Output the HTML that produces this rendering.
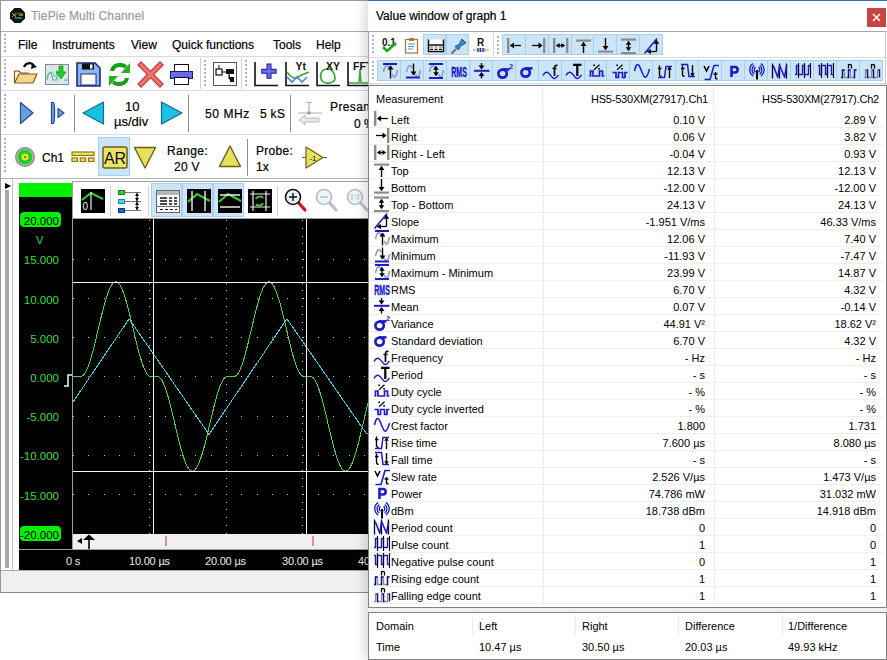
<!DOCTYPE html><html><head><meta charset="utf-8"><style>
*{margin:0;padding:0;box-sizing:border-box}
html,body{width:887px;height:660px;overflow:hidden;background:#fff;font-family:"Liberation Sans",sans-serif;color:#000}
.a{position:absolute}
.t{position:absolute;white-space:nowrap;font-size:12px;line-height:14px;color:#000;-webkit-text-stroke:0.2px currentColor}
.s{position:absolute;white-space:nowrap;font-size:11px;line-height:13px;color:#000}
.grip{position:absolute;width:2px;background:repeating-linear-gradient(#b4b4b4 0 2px,transparent 2px 4px)}
.hl{position:absolute;height:1px;background:#dadada}
.pb{position:absolute;background:#cce4f7;border:1px solid #a6cff0}
svg.a{overflow:visible}
</style></head><body>
<div class="a" style="left:0;top:0;width:887px;height:593px;background:#fff;border-left:1px solid #9a9a9a;border-top:1px solid #9a9a9a;border-bottom:1px solid #8a8a8a"></div>
<svg class="a" style="left:10px;top:8px" width="15" height="15" viewBox="0 0 15 15"><path d="M4.5 0H10.5L15 4.5V10.5L10.5 15H4.5L0 10.5V4.5Z" fill="#111"/><path d="M2 5L6 9M2 9L6 5" stroke="#3c3" stroke-width="1"/><path d="M5 8C7 4 9 5 13 6" stroke="#e44" stroke-width="1" fill="none"/><path d="M5 10H12" stroke="#4ce" stroke-width="1"/><path d="M9 7H13" stroke="#3d3" stroke-width="1.5"/></svg>
<div class="t" style="left:31px;top:9px;color:#9a9a9a;letter-spacing:0.15px">TiePie Multi Channel</div>
<div class="hl" style="left:1px;top:31px;width:886px;background:#ababab"></div>
<div class="grip" style="left:4px;top:34px;height:20px"></div>
<div class="t" style="left:18px;top:38px">File</div>
<div class="t" style="left:52px;top:38px">Instruments</div>
<div class="t" style="left:131px;top:38px">View</div>
<div class="t" style="left:172px;top:38px">Quick functions</div>
<div class="t" style="left:273px;top:38px">Tools</div>
<div class="t" style="left:316px;top:38px">Help</div>
<div class="hl" style="left:1px;top:56px;width:886px"></div>
<div class="grip" style="left:4px;top:59px;height:28px"></div>
<div class="hl" style="left:1px;top:90px;width:886px"></div>
<svg class="a" style="left:13px;top:61px" width="26" height="25" viewBox="0 0 26 25"><path d="M11 6C13 1 19 1 21 5" stroke="#111" stroke-width="2.2" fill="none"/><path d="M19 2L24 6L18 8Z" fill="#111"/><path d="M1.5 10H6L8 12H15V15" stroke="#8a5a18" stroke-width="1.2" fill="#f3c77a"/><path d="M1.5 10V22H20L24 13H6L1.5 22" stroke="#8a5a18" stroke-width="1.2" fill="#f7d58e" stroke-linejoin="round"/></svg>
<svg class="a" style="left:45px;top:64px" width="25" height="22" viewBox="0 0 25 22"><rect x="0.5" y="0.5" width="23" height="20" fill="#dfe6ea" stroke="#808a90"/><path d="M2 16C4 6 6 6 8 16H12V6" stroke="#4ab0e0" stroke-width="1.2" fill="none"/><path d="M2 13C5 5 8 8 10 13" stroke="#3c3" stroke-width="1" fill="none"/><path d="M11 8H14V2H18V8H21L16 15Z" fill="#22cc22" stroke="#1a9a1a" stroke-width="0.8"/><path d="M19 16H23" stroke="#4ab0e0" stroke-width="1.2"/></svg>
<svg class="a" style="left:76px;top:62px" width="25" height="25" viewBox="0 0 25 25"><path d="M1 1H19L24 6V24H1Z" fill="#8fb4f0" stroke="#1a2a80" stroke-width="1.6"/><rect x="6" y="1.5" width="12" height="6" fill="#111"/><rect x="14" y="2.5" width="2.5" height="4" fill="#fff"/><rect x="5" y="12" width="15" height="11" fill="#fff" stroke="#1a2a80" stroke-width="1"/></svg>
<svg class="a" style="left:107px;top:62px" width="25" height="25" viewBox="0 0 25 25"><path d="M5 9C6 3 14 1 19 5" stroke="#16a016" stroke-width="4" fill="none"/><path d="M23 1V11H14Z" fill="#22b222"/><path d="M20 16C19 22 11 24 6 20" stroke="#16a016" stroke-width="4" fill="none"/><path d="M2 24V14H11Z" fill="#22b222"/></svg>
<svg class="a" style="left:139px;top:63px" width="23" height="23" viewBox="0 0 23 23"><path d="M2 2L21 21M21 2L2 21" stroke="#b83030" stroke-width="5.5" stroke-linecap="square"/><path d="M2 2L21 21M21 2L2 21" stroke="#f07070" stroke-width="3.5" stroke-linecap="square"/></svg>
<svg class="a" style="left:170px;top:64px" width="24" height="22" viewBox="0 0 24 22"><rect x="4.5" y="0.5" width="14" height="7" fill="#fff" stroke="#111"/><rect x="0.5" y="7.5" width="22" height="7" fill="#6a6ae8" stroke="#1a1a80"/><rect x="4.5" y="13.5" width="14" height="7" fill="#fff" stroke="#111"/></svg>
<div class="a" style="left:200px;top:58px;width:1px;height:31px;background:#d0d0d0"></div>
<div class="grip" style="left:204px;top:60px;height:28px"></div>
<svg class="a" style="left:213px;top:62px" width="25" height="25" viewBox="0 0 25 25"><rect x="0.5" y="0.5" width="23" height="23" fill="#fff" stroke="#555"/><rect x="3" y="7" width="6" height="6" fill="#fff" stroke="#111" stroke-width="1.2"/><path d="M6 3V7M9 10H13M16 12V17H18" stroke="#111"/><rect x="13" y="7" width="8" height="5" fill="#111"/><rect x="17" y="15" width="4" height="5" fill="#111"/></svg>
<div class="a" style="left:241px;top:58px;width:1px;height:31px;background:#d0d0d0"></div>
<div class="grip" style="left:245px;top:60px;height:28px"></div>
<svg class="a" style="left:254px;top:62px" width="25" height="25" viewBox="0 0 25 25"><path d="M1 0V23.5H24" stroke="#111" stroke-width="1.6" fill="none"/><path d="M15 1.5V16.8M7.2 9.2H22.6" stroke="#1a1a90" stroke-width="5"/><path d="M15 2.5V15.8M8.2 9.2H21.6" stroke="#6a6af0" stroke-width="3"/></svg>
<svg class="a" style="left:285px;top:62px" width="25" height="25" viewBox="0 0 25 25"><path d="M1 0V23.5H24" stroke="#111" stroke-width="1.6" fill="none"/><path d="M2 10C5 14 9 18 13 15S20 12 24 10" stroke="#3aa53a" stroke-width="1.6" fill="none"/><path d="M2 15L7 20L12 15L17 20L22 15" stroke="#4a8ac0" stroke-width="1.6" fill="none"/><text x="10.5" y="8.3" font-family="Liberation Sans" font-weight="bold" font-size="10.5" fill="#111">Yt</text></svg>
<svg class="a" style="left:316px;top:62px" width="25" height="25" viewBox="0 0 25 25"><path d="M1 0V23.5H24" stroke="#111" stroke-width="1.6" fill="none"/><path d="M11 7C5 7 3 14 6 19C10 23 19 21 19 16C19 11 15 6 11 7Z" stroke="#3aa53a" stroke-width="1.7" fill="none"/><text x="10" y="8.3" font-family="Liberation Sans" font-weight="bold" font-size="10.5" fill="#111">XY</text></svg>
<svg class="a" style="left:347px;top:62px" width="25" height="25" viewBox="0 0 25 25"><path d="M1 0V23.5H24" stroke="#111" stroke-width="1.6" fill="none"/><path d="M2 21H12L13 7L14 21H24" stroke="#3aa53a" stroke-width="1.4" fill="none"/><text x="6" y="8.3" font-family="Liberation Sans" font-weight="bold" font-size="10.5" fill="#111">FFT</text></svg>
<div class="grip" style="left:4px;top:94px;height:36px"></div>
<div class="hl" style="left:1px;top:134px;width:886px"></div>
<svg class="a" style="left:19px;top:101px" width="16" height="24" viewBox="0 0 16 24"><path d="M1.5 1.5L14 12L1.5 22.5Z" fill="#6a9ee0" stroke="#1f4f90" stroke-width="1.2" stroke-linejoin="round"/></svg>
<svg class="a" style="left:50px;top:101px" width="16" height="24" viewBox="0 0 16 24"><path d="M1.5 1.5H3.5C5 4 5 20 3.5 22.5H1.5Z" fill="#6a9ee0" stroke="#1f4f90" stroke-width="1.2"/><path d="M8 7.5L14 12L8 16.5Z" fill="#6a9ee0" stroke="#1f4f90" stroke-width="1.2" stroke-linejoin="round"/></svg>
<div class="a" style="left:74px;top:95px;width:1px;height:37px;background:#8a8a8a"></div>
<svg class="a" style="left:82px;top:101px" width="23" height="24" viewBox="0 0 23 24"><path d="M21.5 1L1 12L21.5 23Z" fill="#1cc0e0" stroke="#0d6aa0" stroke-width="1.2" stroke-linejoin="round"/></svg>
<div class="t" style="left:125px;top:100px;font-size:13px">10</div>
<div class="t" style="left:114px;top:115px;font-size:13px">µs/div</div>
<svg class="a" style="left:160px;top:101px" width="23" height="24" viewBox="0 0 23 24"><path d="M1.5 1L22 12L1.5 23Z" fill="#1cc0e0" stroke="#0d6aa0" stroke-width="1.2" stroke-linejoin="round"/></svg>
<div class="a" style="left:188px;top:95px;width:1px;height:37px;background:#8a8a8a"></div>
<div class="t" style="left:205px;top:107px;letter-spacing:0.6px">50 MHz</div>
<div class="t" style="left:260px;top:107px;letter-spacing:0.3px">5 kS</div>
<div class="a" style="left:290px;top:95px;width:1px;height:37px;background:#8a8a8a"></div>
<svg class="a" style="left:297px;top:101px" width="26" height="24" viewBox="0 0 26 24"><path d="M9 1.5H15M12 1.5V11M1 12H25" stroke="#b0b0b0" stroke-width="1.2"/><rect x="10.5" y="10.5" width="3" height="3" fill="#999"/><path d="M2 19L8 14V17H22V21H8V24Z" fill="#e8e8e8" stroke="#b8b8b8" stroke-width="1"/></svg>
<div class="t" style="left:330px;top:100px;letter-spacing:0.4px">Presamples</div>
<div class="t" style="left:354px;top:117px">0 %</div>
<div class="grip" style="left:4px;top:138px;height:36px"></div>
<div class="hl" style="left:1px;top:178px;width:886px;background:#b4b4b4"></div>
<svg class="a" style="left:14px;top:146px" width="22" height="22" viewBox="0 0 22 22"><circle cx="11" cy="11" r="10" fill="#8a8a8a"/><circle cx="11" cy="11" r="8.6" fill="#bdbdbd"/><circle cx="11" cy="11" r="7.4" fill="#1ed01e"/><circle cx="11" cy="11" r="3.6" fill="#d8e830"/><circle cx="11" cy="11" r="1.1" fill="#a06000"/></svg>
<div class="t" style="left:42px;top:151px">Ch1</div>
<svg class="a" style="left:71px;top:151px" width="24" height="12" viewBox="0 0 24 12"><rect x="1" y="1" width="22" height="3.5" fill="#f0e060" stroke="#8a7a10" stroke-width="1.2"/><rect x="1" y="7" width="5.5" height="3.5" fill="#f0e060" stroke="#8a7a10" stroke-width="1.2"/><rect x="9.25" y="7" width="5.5" height="3.5" fill="#f0e060" stroke="#8a7a10" stroke-width="1.2"/><rect x="17.5" y="7" width="5.5" height="3.5" fill="#f0e060" stroke="#8a7a10" stroke-width="1.2"/></svg>
<div class="pb" style="left:98px;top:137px;width:32px;height:39px"></div>
<svg class="a" style="left:102px;top:146px" width="26" height="23" viewBox="0 0 26 23"><rect x="1" y="1" width="24" height="21" rx="2" fill="#ece46a" stroke="#6a6010" stroke-width="1.5"/><text x="13" y="18" text-anchor="middle" font-family="Liberation Sans" font-size="16" fill="#111">AR</text></svg>
<svg class="a" style="left:133px;top:146px" width="24" height="23" viewBox="0 0 24 23"><path d="M1.5 1.5H22.5L12 22Z" fill="#e8e060" stroke="#6a6010" stroke-width="1.4" stroke-linejoin="round"/></svg>
<div class="t" style="left:167px;top:144px;letter-spacing:0.4px">Range:</div>
<div class="t" style="left:174px;top:160px;letter-spacing:0.3px">20 V</div>
<svg class="a" style="left:218px;top:145px" width="24" height="23" viewBox="0 0 24 23"><path d="M1.5 21.5H22.5L12 1Z" fill="#e8e060" stroke="#6a6010" stroke-width="1.4" stroke-linejoin="round"/></svg>
<div class="a" style="left:247px;top:139px;width:1px;height:37px;background:#8a8a8a"></div>
<div class="t" style="left:256px;top:144px;letter-spacing:0.3px">Probe:</div>
<div class="t" style="left:256px;top:160px">1x</div>
<svg class="a" style="left:302px;top:146px" width="26" height="23" viewBox="0 0 26 23"><path d="M0 11.5H4M20 11.5H25" stroke="#6a6010" stroke-width="1"/><path d="M4 1L21 11.5L4 22Z" fill="#e8e060" stroke="#6a6010" stroke-width="1.2" stroke-linejoin="round"/><text x="11" y="14.5" text-anchor="middle" font-family="Liberation Sans" font-size="8" fill="#111">-1</text></svg>
<svg class="a" style="left:5px;top:183px" width="6" height="6" viewBox="0 0 6 6"><path d="M0 0L6 3L0 6Z" fill="#000"/></svg>
<div class="a" style="left:5px;top:190px;width:4px;height:378px;background:#a8a8a8"></div>
<div class="a" style="left:12px;top:179px;width:1px;height:392px;background:#c4c4c4"></div>
<div class="a" style="left:19px;top:183px;width:53px;height:366px;background:#000"></div>
<div class="a" style="left:19px;top:183px;width:53px;height:14px;background:#00f000"></div>
<div class="a" style="left:72px;top:181px;width:1px;height:368px;background:#a0a0a0"></div>
<div class="a" style="left:73px;top:181px;width:814px;height:1px;background:#a0a0a0"></div>
<div class="a" style="left:73px;top:182px;width:814px;height:36px;background:#fff"></div>
<div class="a" style="left:73px;top:218px;width:814px;height:1px;background:#a0a0a0"></div>
<div class="a" style="left:73px;top:534px;width:814px;height:15px;background:#f0f0f0"></div>
<div class="a" style="left:19px;top:549px;width:868px;height:1px;background:#a0a0a0"></div>
<div class="a" style="left:19px;top:550px;width:868px;height:20px;background:#000"></div>
<div class="a" style="left:1px;top:570px;width:886px;height:1px;background:#a8a8a8"></div>
<div class="a" style="left:1px;top:571px;width:886px;height:21px;background:#f0f0f0"></div>
<div class="a" style="left:20px;top:212px;width:41px;height:15px;background:#00f000;border-radius:4px"></div>
<div class="s" style="right:828px;top:215px;color:#000;font-size:11.5px">20.000</div>
<div class="s" style="right:828px;top:254px;color:#3ddc3d;font-size:11.5px">15.000</div>
<div class="s" style="right:828px;top:294px;color:#3ddc3d;font-size:11.5px">10.000</div>
<div class="s" style="right:828px;top:333px;color:#3ddc3d;font-size:11.5px">5.000</div>
<div class="s" style="right:828px;top:372px;color:#3ddc3d;font-size:11.5px">0.000</div>
<div class="s" style="right:828px;top:411px;color:#3ddc3d;font-size:11.5px">-5.000</div>
<div class="s" style="right:828px;top:450px;color:#3ddc3d;font-size:11.5px">-10.000</div>
<div class="s" style="right:828px;top:490px;color:#3ddc3d;font-size:11.5px">-15.000</div>
<div class="a" style="left:20px;top:526px;width:41px;height:15px;background:#00f000;border-radius:4px"></div>
<div class="s" style="right:828px;top:529px;color:#000;font-size:11.5px">-20.000</div>
<div class="s" style="left:36px;top:234px;color:#3ddc3d;font-size:11px">V</div>
<svg class="a" style="left:81px;top:189px" width="24" height="24" viewBox="0 0 24 24"><rect width="24" height="24" fill="#000"/><path d="M1 11L10 4L22 10" stroke="#3c3" stroke-width="2" fill="none"/><path d="M10 3V21" stroke="#eee" stroke-width="1.2"/><text x="1.5" y="21" font-family="Liberation Sans" font-size="10" fill="#eee">0</text></svg>
<div class="a" style="left:110px;top:186px;width:1px;height:30px;background:#d0d0d0"></div>
<svg class="a" style="left:118px;top:189px" width="24" height="24" viewBox="0 0 24 24"><rect x="0.5" y="1.5" width="6" height="4" fill="#3c3" stroke="#1a7a1a"/><rect x="0.5" y="10.5" width="6" height="4" fill="#2ce0f0" stroke="#1a8a9a"/><rect x="0.5" y="19.5" width="6" height="4" fill="#1a6acc" stroke="#0a3a80"/><path d="M7 3.5H23M7 12.5H23M7 21.5H23" stroke="#555" stroke-width="0.8"/><path d="M19 4V21" stroke="#000" stroke-width="1"/><path d="M19 4L17 7H21ZM19 12L17 9H21ZM19 13L17 16H21ZM19 21L17 18H21Z" fill="#000"/></svg>
<div class="a" style="left:148px;top:186px;width:1px;height:30px;background:#d0d0d0"></div>
<div class="pb" style="left:151px;top:183px;width:31px;height:34px"></div>
<div class="pb" style="left:182px;top:183px;width:31px;height:34px"></div>
<div class="pb" style="left:213px;top:183px;width:31px;height:34px"></div>
<svg class="a" style="left:156px;top:190px" width="24" height="23" viewBox="0 0 24 23"><rect x="0.5" y="0.5" width="23" height="22" fill="#fff" stroke="#666"/><rect x="1" y="1" width="22" height="4" fill="#b8b8b8"/><path d="M4 8H11M13 8H16M18 8H21M4 11H11M13 11H16M18 11H21M4 14H11M13 14H16M18 14H21" stroke="#111" stroke-width="1.4"/><path d="M1 16.5H23" stroke="#666"/><path d="M4 19.5H7M9 19.5H12M14 19.5H17M19 19.5H21" stroke="#111" stroke-width="1.2"/></svg>
<svg class="a" style="left:187px;top:189px" width="24" height="24" viewBox="0 0 24 24"><rect width="24" height="24" fill="#000"/><path d="M1 13L10 5L23 12" stroke="#3c3" stroke-width="2.2" fill="none"/><path d="M5 2V22M18 2V22" stroke="#eee" stroke-width="1.4"/></svg>
<svg class="a" style="left:218px;top:189px" width="24" height="24" viewBox="0 0 24 24"><rect width="24" height="24" fill="#000"/><path d="M1 13L10 5L23 12" stroke="#3c3" stroke-width="2.2" fill="none"/><path d="M2 6H22M2 18H22" stroke="#eee" stroke-width="1.4"/></svg>
<svg class="a" style="left:248px;top:189px" width="24" height="24" viewBox="0 0 24 24"><rect width="24" height="24" fill="#000"/><path d="M5 2V22M18 2V22M2 5H22M2 18H22" stroke="#eee" stroke-width="1.2"/><path d="M8 10C9 7 14 7 15 9M15 14C14 17 9 17 8 15" stroke="#3c3" stroke-width="2" fill="none"/></svg>
<div class="a" style="left:277px;top:186px;width:1px;height:30px;background:#d0d0d0"></div>
<svg class="a" style="left:284px;top:188px" width="24" height="25" viewBox="0 0 24 25"><path d="M13 13L21 22" stroke="#d01020" stroke-width="3.2" stroke-linecap="round"/><circle cx="9" cy="9" r="7.5" fill="#e8f4f8" stroke="#111" stroke-width="1.6"/><path d="M5 9H13M9 5V13" stroke="#111" stroke-width="1.4"/></svg>
<svg class="a" style="left:315px;top:188px" width="24" height="25" viewBox="0 0 24 25"><path d="M13 13L21 22" stroke="#c0c0c0" stroke-width="3.2" stroke-linecap="round"/><circle cx="9" cy="9" r="7.5" fill="#e8f4f8" stroke="#bbb" stroke-width="1.6"/><path d="M5 9H13" stroke="#bbb" stroke-width="1.4"/></svg>
<svg class="a" style="left:346px;top:188px" width="24" height="25" viewBox="0 0 24 25"><path d="M13 13L21 22" stroke="#c0c0c0" stroke-width="3.2" stroke-linecap="round"/><circle cx="9" cy="9" r="7.5" fill="#e8f4f8" stroke="#bbb" stroke-width="1.6"/><path d="M6 6V12M12 6V12M9 7V8M9 10V11" stroke="#bbb" stroke-width="1.2"/></svg>
<svg class="a" style="left:73px;top:219px" width="814" height="315" viewBox="73 219 814 315"><rect x="73" y="219" width="814" height="315" fill="#000"/><path d="M149 220h1v1h-1zM149 228h1v1h-1zM149 236h1v1h-1zM149 243h1v1h-1zM149 251h1v1h-1zM149 259h1v1h-1zM149 267h1v1h-1zM149 275h1v1h-1zM149 283h1v1h-1zM149 290h1v1h-1zM149 298h1v1h-1zM149 306h1v1h-1zM149 314h1v1h-1zM149 322h1v1h-1zM149 329h1v1h-1zM149 337h1v1h-1zM149 345h1v1h-1zM149 353h1v1h-1zM149 361h1v1h-1zM149 369h1v1h-1zM149 376h1v1h-1zM149 384h1v1h-1zM149 392h1v1h-1zM149 400h1v1h-1zM149 408h1v1h-1zM149 416h1v1h-1zM149 423h1v1h-1zM149 431h1v1h-1zM149 439h1v1h-1zM149 447h1v1h-1zM149 455h1v1h-1zM149 462h1v1h-1zM149 470h1v1h-1zM149 478h1v1h-1zM149 486h1v1h-1zM149 494h1v1h-1zM149 502h1v1h-1zM149 509h1v1h-1zM149 517h1v1h-1zM149 525h1v1h-1zM149 533h1v1h-1zM226 220h1v1h-1zM226 228h1v1h-1zM226 236h1v1h-1zM226 243h1v1h-1zM226 251h1v1h-1zM226 259h1v1h-1zM226 267h1v1h-1zM226 275h1v1h-1zM226 283h1v1h-1zM226 290h1v1h-1zM226 298h1v1h-1zM226 306h1v1h-1zM226 314h1v1h-1zM226 322h1v1h-1zM226 329h1v1h-1zM226 337h1v1h-1zM226 345h1v1h-1zM226 353h1v1h-1zM226 361h1v1h-1zM226 369h1v1h-1zM226 376h1v1h-1zM226 384h1v1h-1zM226 392h1v1h-1zM226 400h1v1h-1zM226 408h1v1h-1zM226 416h1v1h-1zM226 423h1v1h-1zM226 431h1v1h-1zM226 439h1v1h-1zM226 447h1v1h-1zM226 455h1v1h-1zM226 462h1v1h-1zM226 470h1v1h-1zM226 478h1v1h-1zM226 486h1v1h-1zM226 494h1v1h-1zM226 502h1v1h-1zM226 509h1v1h-1zM226 517h1v1h-1zM226 525h1v1h-1zM226 533h1v1h-1zM302 220h1v1h-1zM302 228h1v1h-1zM302 236h1v1h-1zM302 243h1v1h-1zM302 251h1v1h-1zM302 259h1v1h-1zM302 267h1v1h-1zM302 275h1v1h-1zM302 283h1v1h-1zM302 290h1v1h-1zM302 298h1v1h-1zM302 306h1v1h-1zM302 314h1v1h-1zM302 322h1v1h-1zM302 329h1v1h-1zM302 337h1v1h-1zM302 345h1v1h-1zM302 353h1v1h-1zM302 361h1v1h-1zM302 369h1v1h-1zM302 376h1v1h-1zM302 384h1v1h-1zM302 392h1v1h-1zM302 400h1v1h-1zM302 408h1v1h-1zM302 416h1v1h-1zM302 423h1v1h-1zM302 431h1v1h-1zM302 439h1v1h-1zM302 447h1v1h-1zM302 455h1v1h-1zM302 462h1v1h-1zM302 470h1v1h-1zM302 478h1v1h-1zM302 486h1v1h-1zM302 494h1v1h-1zM302 502h1v1h-1zM302 509h1v1h-1zM302 517h1v1h-1zM302 525h1v1h-1zM302 533h1v1h-1zM379 220h1v1h-1zM379 228h1v1h-1zM379 236h1v1h-1zM379 243h1v1h-1zM379 251h1v1h-1zM379 259h1v1h-1zM379 267h1v1h-1zM379 275h1v1h-1zM379 283h1v1h-1zM379 290h1v1h-1zM379 298h1v1h-1zM379 306h1v1h-1zM379 314h1v1h-1zM379 322h1v1h-1zM379 329h1v1h-1zM379 337h1v1h-1zM379 345h1v1h-1zM379 353h1v1h-1zM379 361h1v1h-1zM379 369h1v1h-1zM379 376h1v1h-1zM379 384h1v1h-1zM379 392h1v1h-1zM379 400h1v1h-1zM379 408h1v1h-1zM379 416h1v1h-1zM379 423h1v1h-1zM379 431h1v1h-1zM379 439h1v1h-1zM379 447h1v1h-1zM379 455h1v1h-1zM379 462h1v1h-1zM379 470h1v1h-1zM379 478h1v1h-1zM379 486h1v1h-1zM379 494h1v1h-1zM379 502h1v1h-1zM379 509h1v1h-1zM379 517h1v1h-1zM379 525h1v1h-1zM379 533h1v1h-1zM456 220h1v1h-1zM456 228h1v1h-1zM456 236h1v1h-1zM456 243h1v1h-1zM456 251h1v1h-1zM456 259h1v1h-1zM456 267h1v1h-1zM456 275h1v1h-1zM456 283h1v1h-1zM456 290h1v1h-1zM456 298h1v1h-1zM456 306h1v1h-1zM456 314h1v1h-1zM456 322h1v1h-1zM456 329h1v1h-1zM456 337h1v1h-1zM456 345h1v1h-1zM456 353h1v1h-1zM456 361h1v1h-1zM456 369h1v1h-1zM456 376h1v1h-1zM456 384h1v1h-1zM456 392h1v1h-1zM456 400h1v1h-1zM456 408h1v1h-1zM456 416h1v1h-1zM456 423h1v1h-1zM456 431h1v1h-1zM456 439h1v1h-1zM456 447h1v1h-1zM456 455h1v1h-1zM456 462h1v1h-1zM456 470h1v1h-1zM456 478h1v1h-1zM456 486h1v1h-1zM456 494h1v1h-1zM456 502h1v1h-1zM456 509h1v1h-1zM456 517h1v1h-1zM456 525h1v1h-1zM456 533h1v1h-1zM532 220h1v1h-1zM532 228h1v1h-1zM532 236h1v1h-1zM532 243h1v1h-1zM532 251h1v1h-1zM532 259h1v1h-1zM532 267h1v1h-1zM532 275h1v1h-1zM532 283h1v1h-1zM532 290h1v1h-1zM532 298h1v1h-1zM532 306h1v1h-1zM532 314h1v1h-1zM532 322h1v1h-1zM532 329h1v1h-1zM532 337h1v1h-1zM532 345h1v1h-1zM532 353h1v1h-1zM532 361h1v1h-1zM532 369h1v1h-1zM532 376h1v1h-1zM532 384h1v1h-1zM532 392h1v1h-1zM532 400h1v1h-1zM532 408h1v1h-1zM532 416h1v1h-1zM532 423h1v1h-1zM532 431h1v1h-1zM532 439h1v1h-1zM532 447h1v1h-1zM532 455h1v1h-1zM532 462h1v1h-1zM532 470h1v1h-1zM532 478h1v1h-1zM532 486h1v1h-1zM532 494h1v1h-1zM532 502h1v1h-1zM532 509h1v1h-1zM532 517h1v1h-1zM532 525h1v1h-1zM532 533h1v1h-1zM609 220h1v1h-1zM609 228h1v1h-1zM609 236h1v1h-1zM609 243h1v1h-1zM609 251h1v1h-1zM609 259h1v1h-1zM609 267h1v1h-1zM609 275h1v1h-1zM609 283h1v1h-1zM609 290h1v1h-1zM609 298h1v1h-1zM609 306h1v1h-1zM609 314h1v1h-1zM609 322h1v1h-1zM609 329h1v1h-1zM609 337h1v1h-1zM609 345h1v1h-1zM609 353h1v1h-1zM609 361h1v1h-1zM609 369h1v1h-1zM609 376h1v1h-1zM609 384h1v1h-1zM609 392h1v1h-1zM609 400h1v1h-1zM609 408h1v1h-1zM609 416h1v1h-1zM609 423h1v1h-1zM609 431h1v1h-1zM609 439h1v1h-1zM609 447h1v1h-1zM609 455h1v1h-1zM609 462h1v1h-1zM609 470h1v1h-1zM609 478h1v1h-1zM609 486h1v1h-1zM609 494h1v1h-1zM609 502h1v1h-1zM609 509h1v1h-1zM609 517h1v1h-1zM609 525h1v1h-1zM609 533h1v1h-1zM685 220h1v1h-1zM685 228h1v1h-1zM685 236h1v1h-1zM685 243h1v1h-1zM685 251h1v1h-1zM685 259h1v1h-1zM685 267h1v1h-1zM685 275h1v1h-1zM685 283h1v1h-1zM685 290h1v1h-1zM685 298h1v1h-1zM685 306h1v1h-1zM685 314h1v1h-1zM685 322h1v1h-1zM685 329h1v1h-1zM685 337h1v1h-1zM685 345h1v1h-1zM685 353h1v1h-1zM685 361h1v1h-1zM685 369h1v1h-1zM685 376h1v1h-1zM685 384h1v1h-1zM685 392h1v1h-1zM685 400h1v1h-1zM685 408h1v1h-1zM685 416h1v1h-1zM685 423h1v1h-1zM685 431h1v1h-1zM685 439h1v1h-1zM685 447h1v1h-1zM685 455h1v1h-1zM685 462h1v1h-1zM685 470h1v1h-1zM685 478h1v1h-1zM685 486h1v1h-1zM685 494h1v1h-1zM685 502h1v1h-1zM685 509h1v1h-1zM685 517h1v1h-1zM685 525h1v1h-1zM685 533h1v1h-1zM762 220h1v1h-1zM762 228h1v1h-1zM762 236h1v1h-1zM762 243h1v1h-1zM762 251h1v1h-1zM762 259h1v1h-1zM762 267h1v1h-1zM762 275h1v1h-1zM762 283h1v1h-1zM762 290h1v1h-1zM762 298h1v1h-1zM762 306h1v1h-1zM762 314h1v1h-1zM762 322h1v1h-1zM762 329h1v1h-1zM762 337h1v1h-1zM762 345h1v1h-1zM762 353h1v1h-1zM762 361h1v1h-1zM762 369h1v1h-1zM762 376h1v1h-1zM762 384h1v1h-1zM762 392h1v1h-1zM762 400h1v1h-1zM762 408h1v1h-1zM762 416h1v1h-1zM762 423h1v1h-1zM762 431h1v1h-1zM762 439h1v1h-1zM762 447h1v1h-1zM762 455h1v1h-1zM762 462h1v1h-1zM762 470h1v1h-1zM762 478h1v1h-1zM762 486h1v1h-1zM762 494h1v1h-1zM762 502h1v1h-1zM762 509h1v1h-1zM762 517h1v1h-1zM762 525h1v1h-1zM762 533h1v1h-1zM73 259h1v1h-1zM88 259h1v1h-1zM104 259h1v1h-1zM119 259h1v1h-1zM134 259h1v1h-1zM150 259h1v1h-1zM165 259h1v1h-1zM180 259h1v1h-1zM195 259h1v1h-1zM211 259h1v1h-1zM226 259h1v1h-1zM241 259h1v1h-1zM257 259h1v1h-1zM272 259h1v1h-1zM287 259h1v1h-1zM303 259h1v1h-1zM318 259h1v1h-1zM333 259h1v1h-1zM349 259h1v1h-1zM364 259h1v1h-1zM379 259h1v1h-1zM395 259h1v1h-1zM410 259h1v1h-1zM425 259h1v1h-1zM441 259h1v1h-1zM456 259h1v1h-1zM471 259h1v1h-1zM487 259h1v1h-1zM502 259h1v1h-1zM517 259h1v1h-1zM532 259h1v1h-1zM548 259h1v1h-1zM563 259h1v1h-1zM578 259h1v1h-1zM594 259h1v1h-1zM609 259h1v1h-1zM624 259h1v1h-1zM640 259h1v1h-1zM655 259h1v1h-1zM670 259h1v1h-1zM686 259h1v1h-1zM701 259h1v1h-1zM716 259h1v1h-1zM732 259h1v1h-1zM747 259h1v1h-1zM762 259h1v1h-1zM778 259h1v1h-1zM793 259h1v1h-1zM808 259h1v1h-1zM824 259h1v1h-1zM839 259h1v1h-1zM73 298h1v1h-1zM88 298h1v1h-1zM104 298h1v1h-1zM119 298h1v1h-1zM134 298h1v1h-1zM150 298h1v1h-1zM165 298h1v1h-1zM180 298h1v1h-1zM195 298h1v1h-1zM211 298h1v1h-1zM226 298h1v1h-1zM241 298h1v1h-1zM257 298h1v1h-1zM272 298h1v1h-1zM287 298h1v1h-1zM303 298h1v1h-1zM318 298h1v1h-1zM333 298h1v1h-1zM349 298h1v1h-1zM364 298h1v1h-1zM379 298h1v1h-1zM395 298h1v1h-1zM410 298h1v1h-1zM425 298h1v1h-1zM441 298h1v1h-1zM456 298h1v1h-1zM471 298h1v1h-1zM487 298h1v1h-1zM502 298h1v1h-1zM517 298h1v1h-1zM532 298h1v1h-1zM548 298h1v1h-1zM563 298h1v1h-1zM578 298h1v1h-1zM594 298h1v1h-1zM609 298h1v1h-1zM624 298h1v1h-1zM640 298h1v1h-1zM655 298h1v1h-1zM670 298h1v1h-1zM686 298h1v1h-1zM701 298h1v1h-1zM716 298h1v1h-1zM732 298h1v1h-1zM747 298h1v1h-1zM762 298h1v1h-1zM778 298h1v1h-1zM793 298h1v1h-1zM808 298h1v1h-1zM824 298h1v1h-1zM839 298h1v1h-1zM73 337h1v1h-1zM88 337h1v1h-1zM104 337h1v1h-1zM119 337h1v1h-1zM134 337h1v1h-1zM150 337h1v1h-1zM165 337h1v1h-1zM180 337h1v1h-1zM195 337h1v1h-1zM211 337h1v1h-1zM226 337h1v1h-1zM241 337h1v1h-1zM257 337h1v1h-1zM272 337h1v1h-1zM287 337h1v1h-1zM303 337h1v1h-1zM318 337h1v1h-1zM333 337h1v1h-1zM349 337h1v1h-1zM364 337h1v1h-1zM379 337h1v1h-1zM395 337h1v1h-1zM410 337h1v1h-1zM425 337h1v1h-1zM441 337h1v1h-1zM456 337h1v1h-1zM471 337h1v1h-1zM487 337h1v1h-1zM502 337h1v1h-1zM517 337h1v1h-1zM532 337h1v1h-1zM548 337h1v1h-1zM563 337h1v1h-1zM578 337h1v1h-1zM594 337h1v1h-1zM609 337h1v1h-1zM624 337h1v1h-1zM640 337h1v1h-1zM655 337h1v1h-1zM670 337h1v1h-1zM686 337h1v1h-1zM701 337h1v1h-1zM716 337h1v1h-1zM732 337h1v1h-1zM747 337h1v1h-1zM762 337h1v1h-1zM778 337h1v1h-1zM793 337h1v1h-1zM808 337h1v1h-1zM824 337h1v1h-1zM839 337h1v1h-1zM73 376h1v1h-1zM88 376h1v1h-1zM104 376h1v1h-1zM119 376h1v1h-1zM134 376h1v1h-1zM150 376h1v1h-1zM165 376h1v1h-1zM180 376h1v1h-1zM195 376h1v1h-1zM211 376h1v1h-1zM226 376h1v1h-1zM241 376h1v1h-1zM257 376h1v1h-1zM272 376h1v1h-1zM287 376h1v1h-1zM303 376h1v1h-1zM318 376h1v1h-1zM333 376h1v1h-1zM349 376h1v1h-1zM364 376h1v1h-1zM379 376h1v1h-1zM395 376h1v1h-1zM410 376h1v1h-1zM425 376h1v1h-1zM441 376h1v1h-1zM456 376h1v1h-1zM471 376h1v1h-1zM487 376h1v1h-1zM502 376h1v1h-1zM517 376h1v1h-1zM532 376h1v1h-1zM548 376h1v1h-1zM563 376h1v1h-1zM578 376h1v1h-1zM594 376h1v1h-1zM609 376h1v1h-1zM624 376h1v1h-1zM640 376h1v1h-1zM655 376h1v1h-1zM670 376h1v1h-1zM686 376h1v1h-1zM701 376h1v1h-1zM716 376h1v1h-1zM732 376h1v1h-1zM747 376h1v1h-1zM762 376h1v1h-1zM778 376h1v1h-1zM793 376h1v1h-1zM808 376h1v1h-1zM824 376h1v1h-1zM839 376h1v1h-1zM73 416h1v1h-1zM88 416h1v1h-1zM104 416h1v1h-1zM119 416h1v1h-1zM134 416h1v1h-1zM150 416h1v1h-1zM165 416h1v1h-1zM180 416h1v1h-1zM195 416h1v1h-1zM211 416h1v1h-1zM226 416h1v1h-1zM241 416h1v1h-1zM257 416h1v1h-1zM272 416h1v1h-1zM287 416h1v1h-1zM303 416h1v1h-1zM318 416h1v1h-1zM333 416h1v1h-1zM349 416h1v1h-1zM364 416h1v1h-1zM379 416h1v1h-1zM395 416h1v1h-1zM410 416h1v1h-1zM425 416h1v1h-1zM441 416h1v1h-1zM456 416h1v1h-1zM471 416h1v1h-1zM487 416h1v1h-1zM502 416h1v1h-1zM517 416h1v1h-1zM532 416h1v1h-1zM548 416h1v1h-1zM563 416h1v1h-1zM578 416h1v1h-1zM594 416h1v1h-1zM609 416h1v1h-1zM624 416h1v1h-1zM640 416h1v1h-1zM655 416h1v1h-1zM670 416h1v1h-1zM686 416h1v1h-1zM701 416h1v1h-1zM716 416h1v1h-1zM732 416h1v1h-1zM747 416h1v1h-1zM762 416h1v1h-1zM778 416h1v1h-1zM793 416h1v1h-1zM808 416h1v1h-1zM824 416h1v1h-1zM839 416h1v1h-1zM73 455h1v1h-1zM88 455h1v1h-1zM104 455h1v1h-1zM119 455h1v1h-1zM134 455h1v1h-1zM150 455h1v1h-1zM165 455h1v1h-1zM180 455h1v1h-1zM195 455h1v1h-1zM211 455h1v1h-1zM226 455h1v1h-1zM241 455h1v1h-1zM257 455h1v1h-1zM272 455h1v1h-1zM287 455h1v1h-1zM303 455h1v1h-1zM318 455h1v1h-1zM333 455h1v1h-1zM349 455h1v1h-1zM364 455h1v1h-1zM379 455h1v1h-1zM395 455h1v1h-1zM410 455h1v1h-1zM425 455h1v1h-1zM441 455h1v1h-1zM456 455h1v1h-1zM471 455h1v1h-1zM487 455h1v1h-1zM502 455h1v1h-1zM517 455h1v1h-1zM532 455h1v1h-1zM548 455h1v1h-1zM563 455h1v1h-1zM578 455h1v1h-1zM594 455h1v1h-1zM609 455h1v1h-1zM624 455h1v1h-1zM640 455h1v1h-1zM655 455h1v1h-1zM670 455h1v1h-1zM686 455h1v1h-1zM701 455h1v1h-1zM716 455h1v1h-1zM732 455h1v1h-1zM747 455h1v1h-1zM762 455h1v1h-1zM778 455h1v1h-1zM793 455h1v1h-1zM808 455h1v1h-1zM824 455h1v1h-1zM839 455h1v1h-1zM73 494h1v1h-1zM88 494h1v1h-1zM104 494h1v1h-1zM119 494h1v1h-1zM134 494h1v1h-1zM150 494h1v1h-1zM165 494h1v1h-1zM180 494h1v1h-1zM195 494h1v1h-1zM211 494h1v1h-1zM226 494h1v1h-1zM241 494h1v1h-1zM257 494h1v1h-1zM272 494h1v1h-1zM287 494h1v1h-1zM303 494h1v1h-1zM318 494h1v1h-1zM333 494h1v1h-1zM349 494h1v1h-1zM364 494h1v1h-1zM379 494h1v1h-1zM395 494h1v1h-1zM410 494h1v1h-1zM425 494h1v1h-1zM441 494h1v1h-1zM456 494h1v1h-1zM471 494h1v1h-1zM487 494h1v1h-1zM502 494h1v1h-1zM517 494h1v1h-1zM532 494h1v1h-1zM548 494h1v1h-1zM563 494h1v1h-1zM578 494h1v1h-1zM594 494h1v1h-1zM609 494h1v1h-1zM624 494h1v1h-1zM640 494h1v1h-1zM655 494h1v1h-1zM670 494h1v1h-1zM686 494h1v1h-1zM701 494h1v1h-1zM716 494h1v1h-1zM732 494h1v1h-1zM747 494h1v1h-1zM762 494h1v1h-1zM778 494h1v1h-1zM793 494h1v1h-1zM808 494h1v1h-1zM824 494h1v1h-1zM839 494h1v1h-1z" fill="#c8c8c8"/><polyline points="73.0,376.75 73.5,376.58 74.0,376.50 74.5,376.50 75.0,376.50 75.5,376.50 76.0,376.50 76.5,376.50 77.0,376.50 77.5,376.50 78.0,376.50 78.5,376.50 79.0,376.50 79.5,376.50 80.0,376.50 80.5,376.50 81.0,376.49 81.5,376.39 82.0,376.20 82.5,375.92 83.0,375.54 83.5,375.07 84.0,374.50 84.5,373.84 85.0,373.10 85.5,372.26 86.0,371.34 86.5,370.33 87.0,369.24 87.5,368.07 88.0,366.83 88.5,365.50 89.0,364.10 89.5,362.64 90.0,361.10 90.5,359.50 91.0,357.84 91.5,356.12 92.0,354.35 92.5,352.52 93.0,350.65 93.5,348.74 94.0,346.79 94.5,344.80 95.0,342.78 95.5,340.73 96.0,338.66 96.5,336.57 97.0,334.46 97.5,332.35 98.0,330.23 98.5,328.10 99.0,325.98 99.5,323.86 100.0,321.76 100.5,319.67 101.0,317.60 101.5,315.55 102.0,313.53 102.5,311.54 103.0,309.59 103.5,307.67 104.0,305.80 104.5,303.98 105.0,302.21 105.5,300.49 106.0,298.83 106.5,297.23 107.0,295.69 107.5,294.23 108.0,292.83 108.5,291.50 109.0,290.25 109.5,289.08 110.0,287.99 110.5,286.99 111.0,286.07 111.5,285.23 112.0,284.49 112.5,283.83 113.0,283.26 113.5,282.79 114.0,282.41 114.5,282.13 115.0,281.94 115.5,281.84 116.0,281.84 116.5,281.94 117.0,282.13 117.5,282.41 118.0,282.79 118.5,283.26 119.0,283.83 119.5,284.49 120.0,285.23 120.5,286.07 121.0,286.99 121.5,287.99 122.0,289.08 122.5,290.25 123.0,291.50 123.5,292.83 124.0,294.23 124.5,295.69 125.0,297.23 125.5,298.83 126.0,300.49 126.5,302.21 127.0,303.98 127.5,305.80 128.0,307.67 128.5,309.59 129.0,311.54 129.5,313.53 130.0,315.55 130.5,317.60 131.0,319.67 131.5,321.76 132.0,323.86 132.5,325.98 133.0,328.10 133.5,330.23 134.0,332.35 134.5,334.46 135.0,336.57 135.5,338.66 136.0,340.73 136.5,342.78 137.0,344.80 137.5,346.79 138.0,348.74 138.5,350.65 139.0,352.52 139.5,354.35 140.0,356.12 140.5,357.84 141.0,359.50 141.5,361.10 142.0,362.64 142.5,364.10 143.0,365.50 143.5,366.83 144.0,368.07 144.5,369.24 145.0,370.33 145.5,371.34 146.0,372.26 146.5,373.10 147.0,373.84 147.5,374.50 148.0,375.07 148.5,375.54 149.0,375.92 149.5,376.20 150.0,376.39 150.5,376.49 151.0,376.50 151.5,376.50 152.0,376.50 152.5,376.50 153.0,376.50 153.5,376.50 154.0,376.50 154.5,376.50 155.0,376.50 155.5,376.50 156.0,376.50 156.5,376.50 157.0,376.50 157.5,376.50 158.0,376.58 158.5,376.75 159.0,377.02 159.5,377.38 160.0,377.83 160.5,378.38 161.0,379.02 161.5,379.75 162.0,380.56 162.5,381.47 163.0,382.46 163.5,383.53 164.0,384.69 164.5,385.92 165.0,387.23 165.5,388.61 166.0,390.07 166.5,391.59 167.0,393.17 167.5,394.82 168.0,396.53 168.5,398.29 169.0,400.11 169.5,401.97 170.0,403.87 170.5,405.82 171.0,407.80 171.5,409.82 172.0,411.86 172.5,413.92 173.0,416.01 173.5,418.11 174.0,420.23 174.5,422.35 175.0,424.47 175.5,426.60 176.0,428.71 176.5,430.82 177.0,432.91 177.5,434.99 178.0,437.04 178.5,439.07 179.0,441.06 179.5,443.02 180.0,444.95 180.5,446.83 181.0,448.66 181.5,450.44 182.0,452.17 182.5,453.84 183.0,455.46 183.5,457.00 184.0,458.49 184.5,459.90 185.0,461.24 185.5,462.50 186.0,463.69 186.5,464.79 187.0,465.82 187.5,466.76 188.0,467.61 188.5,468.37 189.0,469.05 189.5,469.63 190.0,470.12 190.5,470.52 191.0,470.82 191.5,471.03 192.0,471.15 192.5,471.17 193.0,471.09 193.5,470.92 194.0,470.65 194.5,470.29 195.0,469.84 195.5,469.29 196.0,468.65 196.5,467.92 197.0,467.11 197.5,466.20 198.0,465.21 198.5,464.14 199.0,462.99 199.5,461.75 200.0,460.44 200.5,459.06 201.0,457.61 201.5,456.08 202.0,454.50 202.5,452.85 203.0,451.14 203.5,449.38 204.0,447.56 204.5,445.70 205.0,443.80 205.5,441.85 206.0,439.87 206.5,437.86 207.0,435.81 207.5,433.75 208.0,431.66 208.5,429.56 209.0,427.44 209.5,425.32 210.0,423.20 210.5,421.08 211.0,418.96 211.5,416.85 212.0,414.76 212.5,412.68 213.0,410.63 213.5,408.60 214.0,406.61 214.5,404.65 215.0,402.73 215.5,400.85 216.0,399.01 216.5,397.23 217.0,395.50 217.5,393.83 218.0,392.21 218.5,390.67 219.0,389.18 219.5,387.77 220.0,386.43 220.5,385.17 221.0,383.98 221.5,382.88 222.0,381.85 222.5,380.92 223.0,380.06 223.5,379.30 224.0,378.62 224.5,378.04 225.0,377.55 225.5,377.15 226.0,376.85 226.5,376.64 227.0,376.52 227.5,376.50 228.0,376.50 228.5,376.50 229.0,376.50 229.5,376.50 230.0,376.50 230.5,376.50 231.0,376.50 231.5,376.50 232.0,376.50 232.5,376.50 233.0,376.50 233.5,376.50 234.0,376.50 234.5,376.44 235.0,376.29 235.5,376.04 236.0,375.70 236.5,375.27 237.0,374.74 237.5,374.12 238.0,373.41 238.5,372.61 239.0,371.72 239.5,370.75 240.0,369.69 240.5,368.55 241.0,367.33 241.5,366.04 242.0,364.67 242.5,363.23 243.0,361.72 243.5,360.15 244.0,358.51 244.5,356.82 245.0,355.06 245.5,353.26 246.0,351.41 246.5,349.51 247.0,347.57 247.5,345.60 248.0,343.59 248.5,341.55 249.0,339.49 249.5,337.41 250.0,335.31 250.5,333.20 251.0,331.08 251.5,328.95 252.0,326.83 252.5,324.71 253.0,322.60 253.5,320.50 254.0,318.42 254.5,316.37 255.0,314.34 255.5,312.33 256.0,310.37 256.5,308.44 257.0,306.55 257.5,304.70 258.0,302.91 258.5,301.17 259.0,299.49 259.5,297.86 260.0,296.30 260.5,294.80 261.0,293.38 261.5,292.02 262.0,290.74 262.5,289.54 263.0,288.42 263.5,287.38 264.0,286.42 264.5,285.56 265.0,284.77 265.5,284.08 266.0,283.48 266.5,282.97 267.0,282.55 267.5,282.23 268.0,282.00 268.5,281.87 269.0,281.83 269.5,281.89 270.0,282.04 270.5,282.29 271.0,282.63 271.5,283.06 272.0,283.59 272.5,284.21 273.0,284.92 273.5,285.72 274.0,286.61 274.5,287.58 275.0,288.64 275.5,289.78 276.0,290.99 276.5,292.29 277.0,293.66 277.5,295.10 278.0,296.61 278.5,298.18 279.0,299.82 279.5,301.51 280.0,303.27 280.5,305.07 281.0,306.92 281.5,308.82 282.0,310.76 282.5,312.73 283.0,314.74 283.5,316.78 284.0,318.84 284.5,320.92 285.0,323.02 285.5,325.13 286.0,327.25 286.5,329.38 287.0,331.50 287.5,333.62 288.0,335.73 288.5,337.83 289.0,339.90 289.5,341.96 290.0,343.99 290.5,346.00 291.0,347.96 291.5,349.89 292.0,351.78 292.5,353.62 293.0,355.42 293.5,357.16 294.0,358.84 294.5,360.47 295.0,362.03 295.5,363.52 296.0,364.95 296.5,366.30 297.0,367.58 297.5,368.79 298.0,369.91 298.5,370.95 299.0,371.90 299.5,372.77 300.0,373.56 300.5,374.25 301.0,374.85 301.5,375.36 302.0,375.78 302.5,376.10 303.0,376.33 303.5,376.46 304.0,376.50 304.5,376.50 305.0,376.50 305.5,376.50 306.0,376.50 306.5,376.50 307.0,376.50 307.5,376.50 308.0,376.50 308.5,376.50 309.0,376.50 309.5,376.50 310.0,376.50 310.5,376.50 311.0,376.54 311.5,376.67 312.0,376.90 312.5,377.22 313.0,377.64 313.5,378.15 314.0,378.75 314.5,379.44 315.0,380.23 315.5,381.10 316.0,382.05 316.5,383.09 317.0,384.21 317.5,385.42 318.0,386.70 318.5,388.05 319.0,389.48 319.5,390.97 320.0,392.53 320.5,394.16 321.0,395.84 321.5,397.58 322.0,399.38 322.5,401.22 323.0,403.11 323.5,405.04 324.0,407.00 324.5,409.01 325.0,411.04 325.5,413.10 326.0,415.17 326.5,417.27 327.0,419.38 327.5,421.50 328.0,423.62 328.5,425.75 329.0,427.87 329.5,429.98 330.0,432.08 330.5,434.16 331.0,436.22 331.5,438.26 332.0,440.27 332.5,442.24 333.0,444.18 333.5,446.08 334.0,447.93 334.5,449.73 335.0,451.49 335.5,453.18 336.0,454.82 336.5,456.39 337.0,457.90 337.5,459.34 338.0,460.71 338.5,462.01 339.0,463.22 339.5,464.36 340.0,465.42 340.5,466.39 341.0,467.28 341.5,468.08 342.0,468.79 342.5,469.41 343.0,469.94 343.5,470.37 344.0,470.71 344.5,470.96 345.0,471.11 345.5,471.17 346.0,471.13 346.5,471.00 347.0,470.77 347.5,470.45 348.0,470.03 348.5,469.52 349.0,468.92 349.5,468.23 350.0,467.44 350.5,466.58 351.0,465.62 351.5,464.58 352.0,463.46 352.5,462.26 353.0,460.98 353.5,459.62 354.0,458.20 354.5,456.70 355.0,455.14 355.5,453.51 356.0,451.83 356.5,450.09 357.0,448.30 357.5,446.45 358.0,444.56 358.5,442.63 359.0,440.67 359.5,438.66 360.0,436.63 360.5,434.58 361.0,432.50 361.5,430.40 362.0,428.29 362.5,426.17 363.0,424.05 363.5,421.92 364.0,419.80 364.5,417.69 365.0,415.59 365.5,413.51 366.0,411.45 366.5,409.41 367.0,407.40 367.5,405.43 368.0,403.49 368.5,401.59 369.0,399.74 369.5,397.94 370.0,396.18 370.5,394.49 371.0,392.85 371.5,391.28 372.0,389.77 372.5,388.33" fill="none" stroke="#50d050" stroke-width="1" shape-rendering="crispEdges"/><polyline points="73.0,402.05 73.5,401.31 74.0,400.57 74.5,399.82 75.0,399.08 75.5,398.34 76.0,397.60 76.5,396.86 77.0,396.11 77.5,395.37 78.0,394.63 78.5,393.89 79.0,393.15 79.5,392.40 80.0,391.66 80.5,390.92 81.0,390.18 81.5,389.44 82.0,388.69 82.5,387.95 83.0,387.21 83.5,386.47 84.0,385.73 84.5,384.98 85.0,384.24 85.5,383.50 86.0,382.76 86.5,382.02 87.0,381.27 87.5,380.53 88.0,379.79 88.5,379.05 89.0,378.31 89.5,377.56 90.0,376.82 90.5,376.08 91.0,375.34 91.5,374.60 92.0,373.85 92.5,373.11 93.0,372.37 93.5,371.63 94.0,370.89 94.5,370.14 95.0,369.40 95.5,368.66 96.0,367.92 96.5,367.18 97.0,366.43 97.5,365.69 98.0,364.95 98.5,364.21 99.0,363.47 99.5,362.73 100.0,361.98 100.5,361.24 101.0,360.50 101.5,359.76 102.0,359.02 102.5,358.27 103.0,357.53 103.5,356.79 104.0,356.05 104.5,355.31 105.0,354.56 105.5,353.82 106.0,353.08 106.5,352.34 107.0,351.60 107.5,350.85 108.0,350.11 108.5,349.37 109.0,348.63 109.5,347.89 110.0,347.14 110.5,346.40 111.0,345.66 111.5,344.92 112.0,344.18 112.5,343.43 113.0,342.69 113.5,341.95 114.0,341.21 114.5,340.47 115.0,339.72 115.5,338.98 116.0,338.24 116.5,337.50 117.0,336.76 117.5,336.01 118.0,335.27 118.5,334.53 119.0,333.79 119.5,333.05 120.0,332.30 120.5,331.56 121.0,330.82 121.5,330.08 122.0,329.34 122.5,328.59 123.0,327.85 123.5,327.11 124.0,326.37 124.5,325.63 125.0,324.88 125.5,324.14 126.0,323.40 126.5,322.66 127.0,321.92 127.5,321.17 128.0,320.43 128.5,319.69 129.0,318.95 129.5,319.38 130.0,320.10 130.5,320.83 131.0,321.55 131.5,322.27 132.0,323.00 132.5,323.72 133.0,324.44 133.5,325.17 134.0,325.89 134.5,326.61 135.0,327.34 135.5,328.06 136.0,328.78 136.5,329.51 137.0,330.23 137.5,330.95 138.0,331.68 138.5,332.40 139.0,333.12 139.5,333.85 140.0,334.57 140.5,335.29 141.0,336.02 141.5,336.74 142.0,337.46 142.5,338.19 143.0,338.91 143.5,339.63 144.0,340.36 144.5,341.08 145.0,341.80 145.5,342.53 146.0,343.25 146.5,343.97 147.0,344.70 147.5,345.42 148.0,346.14 148.5,346.87 149.0,347.59 149.5,348.31 150.0,349.04 150.5,349.76 151.0,350.49 151.5,351.21 152.0,351.93 152.5,352.66 153.0,353.38 153.5,354.10 154.0,354.83 154.5,355.55 155.0,356.27 155.5,357.00 156.0,357.72 156.5,358.44 157.0,359.17 157.5,359.89 158.0,360.61 158.5,361.34 159.0,362.06 159.5,362.78 160.0,363.51 160.5,364.23 161.0,364.95 161.5,365.68 162.0,366.40 162.5,367.12 163.0,367.85 163.5,368.57 164.0,369.29 164.5,370.02 165.0,370.74 165.5,371.46 166.0,372.19 166.5,372.91 167.0,373.63 167.5,374.36 168.0,375.08 168.5,375.80 169.0,376.53 169.5,377.25 170.0,377.97 170.5,378.70 171.0,379.42 171.5,380.14 172.0,380.87 172.5,381.59 173.0,382.31 173.5,383.04 174.0,383.76 174.5,384.49 175.0,385.21 175.5,385.93 176.0,386.66 176.5,387.38 177.0,388.10 177.5,388.83 178.0,389.55 178.5,390.27 179.0,391.00 179.5,391.72 180.0,392.44 180.5,393.17 181.0,393.89 181.5,394.61 182.0,395.34 182.5,396.06 183.0,396.78 183.5,397.51 184.0,398.23 184.5,398.95 185.0,399.68 185.5,400.40 186.0,401.12 186.5,401.85 187.0,402.57 187.5,403.29 188.0,404.02 188.5,404.74 189.0,405.46 189.5,406.19 190.0,406.91 190.5,407.63 191.0,408.36 191.5,409.08 192.0,409.80 192.5,410.53 193.0,411.25 193.5,411.97 194.0,412.70 194.5,413.42 195.0,414.14 195.5,414.87 196.0,415.59 196.5,416.31 197.0,417.04 197.5,417.76 198.0,418.49 198.5,419.21 199.0,419.93 199.5,420.66 200.0,421.38 200.5,422.10 201.0,422.83 201.5,423.55 202.0,424.27 202.5,425.00 203.0,425.72 203.5,426.44 204.0,427.17 204.5,427.89 205.0,428.61 205.5,429.34 206.0,430.06 206.5,430.78 207.0,431.51 207.5,432.23 208.0,432.95 208.5,433.68 209.0,434.40 209.5,433.66 210.0,432.92 210.5,432.17 211.0,431.43 211.5,430.69 212.0,429.95 212.5,429.21 213.0,428.46 213.5,427.72 214.0,426.98 214.5,426.24 215.0,425.50 215.5,424.75 216.0,424.01 216.5,423.27 217.0,422.53 217.5,421.79 218.0,421.04 218.5,420.30 219.0,419.56 219.5,418.82 220.0,418.08 220.5,417.33 221.0,416.59 221.5,415.85 222.0,415.11 222.5,414.37 223.0,413.62 223.5,412.88 224.0,412.14 224.5,411.40 225.0,410.66 225.5,409.91 226.0,409.17 226.5,408.43 227.0,407.69 227.5,406.95 228.0,406.20 228.5,405.46 229.0,404.72 229.5,403.98 230.0,403.24 230.5,402.49 231.0,401.75 231.5,401.01 232.0,400.27 232.5,399.53 233.0,398.79 233.5,398.04 234.0,397.30 234.5,396.56 235.0,395.82 235.5,395.08 236.0,394.33 236.5,393.59 237.0,392.85 237.5,392.11 238.0,391.37 238.5,390.62 239.0,389.88 239.5,389.14 240.0,388.40 240.5,387.66 241.0,386.91 241.5,386.17 242.0,385.43 242.5,384.69 243.0,383.95 243.5,383.20 244.0,382.46 244.5,381.72 245.0,380.98 245.5,380.24 246.0,379.49 246.5,378.75 247.0,378.01 247.5,377.27 248.0,376.53 248.5,375.78 249.0,375.04 249.5,374.30 250.0,373.56 250.5,372.82 251.0,372.07 251.5,371.33 252.0,370.59 252.5,369.85 253.0,369.11 253.5,368.36 254.0,367.62 254.5,366.88 255.0,366.14 255.5,365.40 256.0,364.65 256.5,363.91 257.0,363.17 257.5,362.43 258.0,361.69 258.5,360.94 259.0,360.20 259.5,359.46 260.0,358.72 260.5,357.98 261.0,357.23 261.5,356.49 262.0,355.75 262.5,355.01 263.0,354.27 263.5,353.52 264.0,352.78 264.5,352.04 265.0,351.30 265.5,350.56 266.0,349.81 266.5,349.07 267.0,348.33 267.5,347.59 268.0,346.85 268.5,346.10 269.0,345.36 269.5,344.62 270.0,343.88 270.5,343.14 271.0,342.39 271.5,341.65 272.0,340.91 272.5,340.17 273.0,339.43 273.5,338.68 274.0,337.94 274.5,337.20 275.0,336.46 275.5,335.72 276.0,334.98 276.5,334.23 277.0,333.49 277.5,332.75 278.0,332.01 278.5,331.27 279.0,330.52 279.5,329.78 280.0,329.04 280.5,328.30 281.0,327.56 281.5,326.81 282.0,326.07 282.5,325.33 283.0,324.59 283.5,323.85 284.0,323.10 284.5,322.36 285.0,321.62 285.5,320.88 286.0,320.14 286.5,319.39 287.0,318.94 287.5,319.67 288.0,320.39 288.5,321.11 289.0,321.83 289.5,322.56 290.0,323.28 290.5,324.00 291.0,324.72 291.5,325.45 292.0,326.17 292.5,326.89 293.0,327.61 293.5,328.34 294.0,329.06 294.5,329.78 295.0,330.50 295.5,331.23 296.0,331.95 296.5,332.67 297.0,333.39 297.5,334.12 298.0,334.84 298.5,335.56 299.0,336.28 299.5,337.01 300.0,337.73 300.5,338.45 301.0,339.17 301.5,339.90 302.0,340.62 302.5,341.34 303.0,342.06 303.5,342.79 304.0,343.51 304.5,344.23 305.0,344.95 305.5,345.68 306.0,346.40 306.5,347.12 307.0,347.84 307.5,348.57 308.0,349.29 308.5,350.01 309.0,350.73 309.5,351.46 310.0,352.18 310.5,352.90 311.0,353.62 311.5,354.35 312.0,355.07 312.5,355.79 313.0,356.51 313.5,357.24 314.0,357.96 314.5,358.68 315.0,359.40 315.5,360.13 316.0,360.85 316.5,361.57 317.0,362.29 317.5,363.02 318.0,363.74 318.5,364.46 319.0,365.18 319.5,365.91 320.0,366.63 320.5,367.35 321.0,368.07 321.5,368.80 322.0,369.52 322.5,370.24 323.0,370.96 323.5,371.69 324.0,372.41 324.5,373.13 325.0,373.85 325.5,374.58 326.0,375.30 326.5,376.02 327.0,376.74 327.5,377.47 328.0,378.19 328.5,378.91 329.0,379.63 329.5,380.36 330.0,381.08 330.5,381.80 331.0,382.52 331.5,383.25 332.0,383.97 332.5,384.69 333.0,385.41 333.5,386.14 334.0,386.86 334.5,387.58 335.0,388.30 335.5,389.03 336.0,389.75 336.5,390.47 337.0,391.19 337.5,391.92 338.0,392.64 338.5,393.36 339.0,394.08 339.5,394.81 340.0,395.53 340.5,396.25 341.0,396.97 341.5,397.70 342.0,398.42 342.5,399.14 343.0,399.86 343.5,400.59 344.0,401.31 344.5,402.03 345.0,402.75 345.5,403.48 346.0,404.20 346.5,404.92 347.0,405.64 347.5,406.37 348.0,407.09 348.5,407.81 349.0,408.53 349.5,409.26 350.0,409.98 350.5,410.70 351.0,411.42 351.5,412.15 352.0,412.87 352.5,413.59 353.0,414.31 353.5,415.04 354.0,415.76 354.5,416.48 355.0,417.20 355.5,417.93 356.0,418.65 356.5,419.37 357.0,420.09 357.5,420.82 358.0,421.54 358.5,422.26 359.0,422.98 359.5,423.71 360.0,424.43 360.5,425.15 361.0,425.87 361.5,426.60 362.0,427.32 362.5,428.04 363.0,428.76 363.5,429.49 364.0,430.21 364.5,430.93 365.0,431.65 365.5,432.38 366.0,433.10 366.5,433.82 367.0,434.25 367.5,433.51 368.0,432.77 368.5,432.03 369.0,431.28 369.5,430.54 370.0,429.80 370.5,429.06 371.0,428.32 371.5,427.57 372.0,426.83 372.5,426.09" fill="none" stroke="#48d0e0" stroke-width="1" shape-rendering="crispEdges"/><path d="M73 282.5H887M73 471.5H887M153.5 219V534M306.5 219V534" stroke="#f4f4f4" stroke-width="1" shape-rendering="crispEdges"/></svg>
<svg class="a" style="left:63px;top:374px" width="10" height="14" viewBox="0 0 10 14"><path d="M9 1H5V12H1" stroke="#eee" stroke-width="1.6" fill="none"/></svg>
<svg class="a" style="left:73px;top:534px" width="300" height="15" viewBox="0 0 300 15"><path d="M4 7L9 4V10Z" fill="#000"/><path d="M16 2V15" stroke="#000" stroke-width="1.6"/><path d="M16 0.5L10 6H22Z" fill="#000"/><path d="M93 2V12M240 2V12" stroke="#d03040" stroke-width="1"/></svg>
<div class="s" style="left:66px;top:555px;color:#eee;letter-spacing:-0.2px">0 s</div>
<div class="s" style="left:129px;top:555px;color:#eee;letter-spacing:-0.2px">10.00 µs</div>
<div class="s" style="left:205px;top:555px;color:#eee;letter-spacing:-0.2px">20.00 µs</div>
<div class="s" style="left:282px;top:555px;color:#eee;letter-spacing:-0.2px">30.00 µs</div>
<div class="s" style="left:358px;top:555px;color:#eee;letter-spacing:-0.2px">40.00 µs</div>
<div class="a" style="left:368px;top:0;width:519px;height:660px;background:#f0f0f0;border-top:1px solid #2f6fb5;box-shadow:-5px 0 9px rgba(0,0,0,0.13)"></div>
<div class="a" style="left:368px;top:1px;width:519px;height:30px;background:#fff"></div>
<div class="t" style="left:376px;top:9px">Value window of graph 1</div>
<svg class="a" style="left:867px;top:8px" width="19" height="19" viewBox="0 0 19 19"><rect width="19" height="19" fill="#c84545"/><path d="M6 6L13 13M13 6L6 13" stroke="#fff" stroke-width="1.6"/></svg>
<div class="hl" style="left:368px;top:31px;width:519px;background:#a8a8a8"></div>
<div class="a" style="left:368px;top:32px;width:519px;height:25px;background:#fff"></div>
<div class="hl" style="left:369px;top:57px;width:518px;background:#dadada"></div>
<div class="a" style="left:368px;top:58px;width:519px;height:25px;background:#fff"></div>
<div class="hl" style="left:369px;top:83px;width:518px;background:#dadada"></div>
<div class="a" style="left:368px;top:31px;width:1px;height:54px;background:#a8a8a8"></div>
<div class="a" style="left:885px;top:31px;width:1px;height:54px;background:#c8c8c8"></div>
<div class="grip" style="left:372px;top:35px;height:20px"></div>
<div class="grip" style="left:372px;top:61px;height:20px"></div>
<svg class="a" style="left:381px;top:37px" width="17" height="17" viewBox="0 0 17 17"><text x="1" y="9" font-family="Liberation Sans" font-weight="bold" font-size="10" fill="#111">0.1</text><path d="M2 10L6 14L15 6" stroke="#22a822" stroke-width="2.6" fill="none"/></svg>
<svg class="a" style="left:404px;top:37px" width="16" height="17" viewBox="0 0 16 17"><rect x="1.5" y="2.5" width="12" height="13.5" fill="#fff" stroke="#b07838" stroke-width="1.3"/><rect x="5" y="1" width="5" height="3" fill="#b07838"/><path d="M4 7H11M4 9.5H10M4 12H9" stroke="#3a9ae0" stroke-width="1.2"/></svg>
<div class="pb" style="left:423px;top:34px;width:23px;height:21px"></div>
<div class="pb" style="left:446px;top:34px;width:23px;height:21px"></div>
<svg class="a" style="left:427px;top:39px" width="18" height="14" viewBox="0 0 18 14"><path d="M1.5 0.5V12.5H16.5V0.5" stroke="#111" stroke-width="1.5" fill="#fff"/><path d="M1.5 6H16.5" stroke="#111" stroke-width="1.5"/><path d="M3 8H6M7.5 8H10.5M12 8H15" stroke="#666" stroke-width="1.2"/><path d="M3 10.3H6M7.5 10.3H10.5M12 10.3H15" stroke="#111" stroke-width="1.2"/></svg>
<svg class="a" style="left:450px;top:37px" width="18" height="18" viewBox="0 0 18 18"><path d="M1.5 16.5L6 12" stroke="#707070" stroke-width="2"/><path d="M5 9.5L9 7.5L12 2L16 6L10.5 9L8.5 13Z" fill="#3a88d0" stroke="#1c5a96" stroke-width="1" stroke-linejoin="round"/></svg>
<svg class="a" style="left:472px;top:37px" width="18" height="17" viewBox="0 0 18 17"><text x="5" y="9" font-family="Liberation Sans" font-weight="bold" font-size="10" fill="#111">R</text><path d="M1 13H17" stroke="#888" stroke-width="1"/><rect x="4" y="11" width="10" height="4" fill="#e8e8e8"/><path d="M6 11V15M8.5 11V15M11 11V15" stroke-width="1.4" stroke="#2a2aa0"/><path d="M7 11V15" stroke="#3a3" stroke-width="0.8"/><path d="M12.5 11V15" stroke="#aa3" stroke-width="1.2"/></svg>
<div class="a" style="left:493px;top:33px;width:1px;height:23px;background:#d8d8d8"></div>
<div class="grip" style="left:497px;top:36px;height:18px"></div>
<div class="pb" style="left:502px;top:34px;width:24px;height:21px"></div>
<div class="pb" style="left:525px;top:34px;width:24px;height:21px"></div>
<div class="pb" style="left:548px;top:34px;width:24px;height:21px"></div>
<div class="pb" style="left:571px;top:34px;width:23px;height:21px"></div>
<div class="pb" style="left:593px;top:34px;width:24px;height:21px"></div>
<div class="pb" style="left:616px;top:34px;width:24px;height:21px"></div>
<div class="pb" style="left:639px;top:34px;width:24px;height:21px"></div>
<svg class="a" style="left:507px;top:38px" width="16" height="16" viewBox="0 0 16 16"><rect x="0" y="0" width="2.4" height="15" fill="#8c8c8c"/><path d="M3.5 7.5H14" stroke="#000" stroke-width="1.3"/><path d="M3.0 7.5L7.0 4.5V10.5Z" fill="#000"/></svg>
<svg class="a" style="left:530px;top:38px" width="16" height="16" viewBox="0 0 16 16"><path d="M2 7.5H12" stroke="#000" stroke-width="1.3"/><path d="M12.5 7.5L8.5 4.5V10.5Z" fill="#000"/><rect x="13" y="0" width="2.4" height="15" fill="#8c8c8c"/></svg>
<svg class="a" style="left:553px;top:38px" width="16" height="16" viewBox="0 0 16 16"><rect x="0" y="0" width="2.4" height="15" fill="#8c8c8c"/><rect x="13" y="0" width="2.4" height="15" fill="#8c8c8c"/><path d="M3.5 7.5H11.5" stroke="#000" stroke-width="1.3"/><path d="M3.0 7.5L6.6 4.9V10.1Z" fill="#000"/><path d="M12.0 7.5L8.4 4.9V10.1Z" fill="#000"/></svg>
<svg class="a" style="left:576px;top:38px" width="16" height="16" viewBox="0 0 16 16"><rect x="0" y="1.5" width="15" height="2.2" fill="#8c8c8c"/><path d="M7.5 4.5V15" stroke="#000" stroke-width="1.4"/><path d="M7.5 4.0L4.5 8.0H10.5Z" fill="#000"/></svg>
<svg class="a" style="left:598px;top:38px" width="16" height="16" viewBox="0 0 16 16"><path d="M7.5 0V11.5" stroke="#000" stroke-width="1.4"/><path d="M7.5 12.0L4.5 8.0H10.5Z" fill="#000"/><rect x="0" y="12.5" width="15" height="2.2" fill="#8c8c8c"/></svg>
<svg class="a" style="left:621px;top:38px" width="16" height="16" viewBox="0 0 16 16"><rect x="0" y="0.5" width="15" height="2.2" fill="#8c8c8c"/><rect x="0" y="14" width="15" height="2.2" fill="#8c8c8c"/><path d="M7.5 3.5V12.5" stroke="#000" stroke-width="1.4"/><path d="M7.5 3.0L4.7 6.8H10.3Z" fill="#000"/><path d="M7.5 13.0L4.7 9.2H10.3Z" fill="#000"/></svg>
<svg class="a" style="left:644px;top:38px" width="16" height="16" viewBox="0 0 16 16"><path d="M0.5 15.5L13 0.5" stroke="#1c1cc8" stroke-width="1.5"/><path d="M12.5 2.5V13.5" stroke="#000" stroke-width="1.4"/><path d="M12.5 2.0L9.7 5.8H15.3Z" fill="#000"/><path d="M3.5 13.5H12.5" stroke="#000" stroke-width="1.3"/><path d="M3.0 13.5L6.8 10.7V16.3Z" fill="#000"/></svg>
<div class="pb" style="left:377px;top:60px;width:24px;height:21px"></div>
<div class="pb" style="left:400px;top:60px;width:24px;height:21px"></div>
<div class="pb" style="left:423px;top:60px;width:24px;height:21px"></div>
<div class="pb" style="left:446px;top:60px;width:24px;height:21px"></div>
<div class="pb" style="left:469px;top:60px;width:24px;height:21px"></div>
<div class="pb" style="left:492px;top:60px;width:24px;height:21px"></div>
<div class="pb" style="left:515px;top:60px;width:24px;height:21px"></div>
<div class="pb" style="left:538px;top:60px;width:24px;height:21px"></div>
<div class="pb" style="left:561px;top:60px;width:24px;height:21px"></div>
<div class="pb" style="left:584px;top:60px;width:23px;height:21px"></div>
<div class="pb" style="left:606px;top:60px;width:24px;height:21px"></div>
<div class="pb" style="left:629px;top:60px;width:24px;height:21px"></div>
<div class="pb" style="left:652px;top:60px;width:24px;height:21px"></div>
<div class="pb" style="left:675px;top:60px;width:24px;height:21px"></div>
<div class="pb" style="left:698px;top:60px;width:24px;height:21px"></div>
<div class="pb" style="left:721px;top:60px;width:24px;height:21px"></div>
<div class="pb" style="left:744px;top:60px;width:24px;height:21px"></div>
<div class="pb" style="left:767px;top:60px;width:24px;height:21px"></div>
<div class="pb" style="left:790px;top:60px;width:24px;height:21px"></div>
<div class="pb" style="left:813px;top:60px;width:24px;height:21px"></div>
<div class="pb" style="left:836px;top:60px;width:24px;height:21px"></div>
<div class="pb" style="left:859px;top:60px;width:24px;height:21px"></div>
<svg class="a" style="left:382px;top:63px" width="16" height="16" viewBox="0 0 16 16"><path d="M1.5 9C3 2 5 1 7 5M10.5 11C12 16 14 15 15.5 7" stroke="#9a9ac8" stroke-width="1.7" fill="none"/><rect x="1" y="0" width="14" height="2" fill="#1c1cc8"/><path d="M8.5 3V15.5" stroke="#000" stroke-width="1.4"/><path d="M8.5 2.5L5.5 6.5H11.5Z" fill="#000"/></svg>
<svg class="a" style="left:405px;top:63px" width="16" height="16" viewBox="0 0 16 16"><path d="M1.5 9C3 2 5 1 7 5M10.5 11C12 16 14 15 15.5 7" stroke="#9a9ac8" stroke-width="1.7" fill="none"/><path d="M8.5 0.5V12" stroke="#000" stroke-width="1.4"/><path d="M8.5 12.5L5.5 8.5H11.5Z" fill="#000"/><rect x="1" y="13.5" width="14" height="2" fill="#1c1cc8"/></svg>
<svg class="a" style="left:428px;top:63px" width="16" height="16" viewBox="0 0 16 16"><path d="M1.5 9C3 2 5 1 7 5M10.5 11C12 16 14 15 15.5 7" stroke="#9a9ac8" stroke-width="1.7" fill="none"/><rect x="1" y="0" width="14" height="2" fill="#1c1cc8"/><rect x="1" y="14" width="14" height="2" fill="#1c1cc8"/><path d="M8 3.5V12.5" stroke="#000" stroke-width="1.4"/><path d="M8 3.0L5.2 6.8H10.8Z" fill="#000"/><path d="M8 13.0L5.2 9.2H10.8Z" fill="#000"/></svg>
<svg class="a" style="left:451px;top:63px" width="16" height="16" viewBox="0 0 16 16"><text x="0.3" y="13.5" font-family="Liberation Sans" font-weight="bold" font-size="14" fill="#1c1cc8" stroke="#1c1cc8" stroke-width="0.5" textLength="15.5" lengthAdjust="spacingAndGlyphs">RMS</text></svg>
<svg class="a" style="left:474px;top:63px" width="16" height="16" viewBox="0 0 16 16"><rect x="0" y="6.8" width="15.5" height="2" fill="#1c1cc8"/><path d="M7.5 0V5M7.5 10.5V15.5" stroke="#000" stroke-width="1.4"/><path d="M7.5 6.5L4.5 2.5H10.5ZM7.5 9L4.5 13H10.5Z" fill="#000"/></svg>
<svg class="a" style="left:497px;top:63px" width="16" height="16" viewBox="0 0 16 16"><ellipse cx="5.6" cy="10.6" rx="4.2" ry="4.0" stroke="#1c1cc8" stroke-width="2.7" fill="none"/><path d="M5 6.4H12.5" stroke="#1c1cc8" stroke-width="2.6"/><text x="12" y="6" font-family="Liberation Sans" font-weight="bold" font-size="7.5" fill="#1c1cc8">2</text></svg>
<svg class="a" style="left:520px;top:63px" width="16" height="16" viewBox="0 0 16 16"><ellipse cx="5.6" cy="9.6" rx="4.2" ry="4.0" stroke="#1c1cc8" stroke-width="2.7" fill="none"/><path d="M5 5.4H12.5" stroke="#1c1cc8" stroke-width="2.6"/></svg>
<svg class="a" style="left:543px;top:63px" width="16" height="16" viewBox="0 0 16 16"><path d="M0 12.5C2 9 3.5 8.5 6 10.5S9 16 11.5 15.5S14 13.5 15.5 12" stroke="#1c1cc8" stroke-width="1.5" fill="none"/><path d="M11.5 13V5C11.5 2.5 12.5 2 14.5 2.5M9.5 5.5H13.5" stroke="#000" stroke-width="1.7" fill="none"/></svg>
<svg class="a" style="left:566px;top:63px" width="16" height="16" viewBox="0 0 16 16"><path d="M0 12.5C2 9 3.5 8.5 6 10.5S9 16 11.5 15.5S14 13.5 15.5 12" stroke="#1c1cc8" stroke-width="1.5" fill="none"/><path d="M7 1.8H15.5M11.3 1.8V13" stroke="#000" stroke-width="2.2"/></svg>
<svg class="a" style="left:589px;top:63px" width="16" height="16" viewBox="0 0 16 16"><path d="M0.5 13H1.5V8H4V13H10.5V8H13.5V13H15.5" stroke="#1c1cc8" stroke-width="1.7" fill="none"/><rect x="4.3" y="1.5" width="1.6" height="1.6" fill="#000"/><rect x="9.3" y="5" width="1.6" height="1.6" fill="#000"/><path d="M5 6.8L10.5 1.8" stroke="#000" stroke-width="1.2"/></svg>
<svg class="a" style="left:612px;top:63px" width="16" height="16" viewBox="0 0 16 16"><path d="M0.5 9.5H4V14.5H6.5V9.5H10.5V14.5H13V9.5H15.5" stroke="#1c1cc8" stroke-width="1.7" fill="none"/><rect x="4.3" y="1.5" width="1.6" height="1.6" fill="#000"/><rect x="9.3" y="5" width="1.6" height="1.6" fill="#000"/><path d="M5 6.8L10.5 1.8" stroke="#000" stroke-width="1.2"/></svg>
<svg class="a" style="left:634px;top:63px" width="16" height="16" viewBox="0 0 16 16"><path d="M0.5 8C2 1 3.5 0.5 5 2.5S9 13 10.5 14S14 12 15.5 6" stroke="#1c1cc8" stroke-width="1.5" fill="none"/></svg>
<svg class="a" style="left:657px;top:63px" width="16" height="16" viewBox="0 0 16 16"><path d="M2.5 2.5V11.5C2.5 13 3.5 13.5 4.5 13M1 5.5H4.5" stroke="#000" stroke-width="1.4" fill="none"/><path d="M1 14.5H7.5L9 3.5H15" stroke="#1c1cc8" stroke-width="1.5" fill="none"/><path d="M12.5 4V15" stroke="#000" stroke-width="1.4"/><path d="M12.5 3.5L10.2 6.8H14.8Z" fill="#000"/></svg>
<svg class="a" style="left:680px;top:63px" width="16" height="16" viewBox="0 0 16 16"><path d="M2.5 2.5V11.5C2.5 13 3.5 13.5 4.5 13M1 5.5H4.5" stroke="#000" stroke-width="1.4" fill="none"/><path d="M1 1.5H7.5L9 13.5H15" stroke="#1c1cc8" stroke-width="1.5" fill="none"/><path d="M12.5 2V13" stroke="#000" stroke-width="1.4"/><path d="M12.5 13.5L10.2 10.2H14.8Z" fill="#000"/></svg>
<svg class="a" style="left:703px;top:63px" width="16" height="16" viewBox="0 0 16 16"><path d="M1 3L3.5 8L6 3" stroke="#000" stroke-width="1.5" fill="none"/><path d="M12.5 9V15C12.5 16 13.5 16 14.5 15.5M10.5 11H14.5" stroke="#000" stroke-width="1.4" fill="none"/><path d="M1.5 16.5H7L11 2.5H16" stroke="#1c1cc8" stroke-width="1.6" fill="none"/></svg>
<svg class="a" style="left:726px;top:63px" width="16" height="16" viewBox="0 0 16 16"><path d="M5.5 14V4H9C12.5 4 12.5 9.5 9 9.5H5.5" stroke="#1c1cc8" stroke-width="2.6" fill="none"/></svg>
<svg class="a" style="left:749px;top:63px" width="16" height="16" viewBox="0 0 16 16"><path d="M4.18 0.69A7.2 7.2 0 0 0 4.18 12.91M11.82 12.91A7.2 7.2 0 0 0 11.82 0.69M5.35 2.56A5.0 5.0 0 0 0 5.35 11.04M10.65 11.04A5.0 5.0 0 0 0 10.65 2.56M6.52 4.43A2.8 2.8 0 0 0 6.52 9.17M9.48 9.17A2.8 2.8 0 0 0 9.48 4.43" stroke="#1c1cc8" stroke-width="1.35" fill="none"/><path d="M8 7V16.5" stroke="#000" stroke-width="2"/></svg>
<svg class="a" style="left:772px;top:63px" width="16" height="16" viewBox="0 0 16 16"><path d="M0.5 0.5V15.5M7.5 0.5V15.5M14.5 0.5V15.5" stroke="#000" stroke-width="1.3"/><path d="M1.2 2.5L5.8 14.2L7.6 2.5L12.6 14.2L14.6 2.5" stroke="#1c1cc8" stroke-width="1.6" fill="none" stroke-linejoin="round"/></svg>
<svg class="a" style="left:795px;top:63px" width="16" height="16" viewBox="0 0 16 16"><path d="M0 11.5H1.5V2.5H3.5V11.5H7.5V2.5H9.5V11.5H13.5V2.5H15.5" stroke="#1c1cc8" stroke-width="1.4" fill="none"/><path d="M3.5 0V15M9.5 0V15M15.5 0V15" stroke="#000" stroke-width="1.1"/></svg>
<svg class="a" style="left:818px;top:63px" width="16" height="16" viewBox="0 0 16 16"><path d="M0 2.5H1.5V11.5H3.5V2.5H7.5V11.5H9.5V2.5H13.5V11.5H15.5" stroke="#1c1cc8" stroke-width="1.4" fill="none"/><path d="M3.5 0V15M9.5 0V15M15.5 0V15" stroke="#000" stroke-width="1.1"/></svg>
<svg class="a" style="left:841px;top:63px" width="16" height="16" viewBox="0 0 16 16"><path d="M7.5 5.5V2.8C7.5 1 10.5 1 10.5 2.8V5.5M7.5 1V5.5" stroke="#000" stroke-width="1.3" fill="none"/><path d="M0 14.5H1.5V7H3.5V14.5H7.5V7H9.5V14.5H13.5V7H15.5" stroke="#909090" stroke-width="1.3" fill="none"/><path d="M0 14.5H1.5V7H3.5M6.5 14.5H7.5V7H9.5M12.5 14.5H13.5V7H15.5" stroke="#10108a" stroke-width="1.4" fill="none"/></svg>
<svg class="a" style="left:864px;top:63px" width="16" height="16" viewBox="0 0 16 16"><path d="M7.5 5.5V2.8C7.5 1 10.5 1 10.5 2.8V5.5M7.5 1V5.5" stroke="#000" stroke-width="1.3" fill="none"/><path d="M0 14.5H1.5V7H3.5V14.5H7.5V7H9.5V14.5H13.5V7H15.5" stroke="#909090" stroke-width="1.3" fill="none"/><path d="M2.5 7H3.5V14.5H4.5M8.5 7H9.5V14.5H10.5M14.5 7H15.5V14.5" stroke="#10108a" stroke-width="1.4" fill="none"/></svg>
<div class="a" style="left:368px;top:85px;width:519px;height:523px;background:#fff;border:1px solid #828282"></div>
<div class="s" style="left:376px;top:93px">Measurement</div>
<div class="s" style="right:179px;top:93px;letter-spacing:-0.2px">HS5-530XM(27917).Ch1</div>
<div class="s" style="right:8px;top:93px;letter-spacing:-0.2px">HS5-530XM(27917).Ch2</div>
<div class="a" style="left:542px;top:87px;width:1px;height:24px;background:#eaeaf0"></div>
<div class="a" style="left:713px;top:87px;width:1px;height:24px;background:#eaeaf0"></div>
<div class="a" style="left:543px;top:111px;width:1px;height:493px;background:#eaeaf0"></div>
<div class="a" style="left:714px;top:111px;width:1px;height:493px;background:#eaeaf0"></div>
<div class="a" style="left:369px;top:127px;width:514px;height:1px;background:#eeeef2"></div>
<div class="a" style="left:369px;top:144px;width:514px;height:1px;background:#eeeef2"></div>
<div class="a" style="left:369px;top:161px;width:514px;height:1px;background:#eeeef2"></div>
<div class="a" style="left:369px;top:178px;width:514px;height:1px;background:#eeeef2"></div>
<div class="a" style="left:369px;top:195px;width:514px;height:1px;background:#eeeef2"></div>
<div class="a" style="left:369px;top:212px;width:514px;height:1px;background:#eeeef2"></div>
<div class="a" style="left:369px;top:229px;width:514px;height:1px;background:#eeeef2"></div>
<div class="a" style="left:369px;top:246px;width:514px;height:1px;background:#eeeef2"></div>
<div class="a" style="left:369px;top:263px;width:514px;height:1px;background:#eeeef2"></div>
<div class="a" style="left:369px;top:280px;width:514px;height:1px;background:#eeeef2"></div>
<div class="a" style="left:369px;top:297px;width:514px;height:1px;background:#eeeef2"></div>
<div class="a" style="left:369px;top:314px;width:514px;height:1px;background:#eeeef2"></div>
<div class="a" style="left:369px;top:331px;width:514px;height:1px;background:#eeeef2"></div>
<div class="a" style="left:369px;top:348px;width:514px;height:1px;background:#eeeef2"></div>
<div class="a" style="left:369px;top:365px;width:514px;height:1px;background:#eeeef2"></div>
<div class="a" style="left:369px;top:382px;width:514px;height:1px;background:#eeeef2"></div>
<div class="a" style="left:369px;top:399px;width:514px;height:1px;background:#eeeef2"></div>
<div class="a" style="left:369px;top:416px;width:514px;height:1px;background:#eeeef2"></div>
<div class="a" style="left:369px;top:433px;width:514px;height:1px;background:#eeeef2"></div>
<div class="a" style="left:369px;top:450px;width:514px;height:1px;background:#eeeef2"></div>
<div class="a" style="left:369px;top:467px;width:514px;height:1px;background:#eeeef2"></div>
<div class="a" style="left:369px;top:484px;width:514px;height:1px;background:#eeeef2"></div>
<div class="a" style="left:369px;top:501px;width:514px;height:1px;background:#eeeef2"></div>
<div class="a" style="left:369px;top:518px;width:514px;height:1px;background:#eeeef2"></div>
<div class="a" style="left:369px;top:535px;width:514px;height:1px;background:#eeeef2"></div>
<div class="a" style="left:369px;top:552px;width:514px;height:1px;background:#eeeef2"></div>
<div class="a" style="left:369px;top:569px;width:514px;height:1px;background:#eeeef2"></div>
<div class="a" style="left:369px;top:586px;width:514px;height:1px;background:#eeeef2"></div>
<div class="a" style="left:369px;top:603px;width:514px;height:1px;background:#eeeef2"></div>
<svg class="a" style="left:374px;top:111px" width="16" height="16" viewBox="0 0 16 16"><rect x="0" y="0" width="2.4" height="15" fill="#8c8c8c"/><path d="M3.5 7.5H14" stroke="#000" stroke-width="1.3"/><path d="M3.0 7.5L7.0 4.5V10.5Z" fill="#000"/></svg>
<div class="s" style="left:391px;top:114px">Left</div>
<div class="s" style="right:182px;top:114px">0.10 V</div>
<div class="s" style="right:11px;top:114px">2.89 V</div>
<svg class="a" style="left:374px;top:128px" width="16" height="16" viewBox="0 0 16 16"><path d="M2 7.5H12" stroke="#000" stroke-width="1.3"/><path d="M12.5 7.5L8.5 4.5V10.5Z" fill="#000"/><rect x="13" y="0" width="2.4" height="15" fill="#8c8c8c"/></svg>
<div class="s" style="left:391px;top:131px">Right</div>
<div class="s" style="right:182px;top:131px">0.06 V</div>
<div class="s" style="right:11px;top:131px">3.82 V</div>
<svg class="a" style="left:374px;top:145px" width="16" height="16" viewBox="0 0 16 16"><rect x="0" y="0" width="2.4" height="15" fill="#8c8c8c"/><rect x="13" y="0" width="2.4" height="15" fill="#8c8c8c"/><path d="M3.5 7.5H11.5" stroke="#000" stroke-width="1.3"/><path d="M3.0 7.5L6.6 4.9V10.1Z" fill="#000"/><path d="M12.0 7.5L8.4 4.9V10.1Z" fill="#000"/></svg>
<div class="s" style="left:391px;top:148px">Right - Left</div>
<div class="s" style="right:182px;top:148px">-0.04 V</div>
<div class="s" style="right:11px;top:148px">0.93 V</div>
<svg class="a" style="left:374px;top:162px" width="16" height="16" viewBox="0 0 16 16"><rect x="0" y="1.5" width="15" height="2.2" fill="#8c8c8c"/><path d="M7.5 4.5V15" stroke="#000" stroke-width="1.4"/><path d="M7.5 4.0L4.5 8.0H10.5Z" fill="#000"/></svg>
<div class="s" style="left:391px;top:165px">Top</div>
<div class="s" style="right:182px;top:165px">12.13 V</div>
<div class="s" style="right:11px;top:165px">12.13 V</div>
<svg class="a" style="left:374px;top:179px" width="16" height="16" viewBox="0 0 16 16"><path d="M7.5 0V11.5" stroke="#000" stroke-width="1.4"/><path d="M7.5 12.0L4.5 8.0H10.5Z" fill="#000"/><rect x="0" y="12.5" width="15" height="2.2" fill="#8c8c8c"/></svg>
<div class="s" style="left:391px;top:182px">Bottom</div>
<div class="s" style="right:182px;top:182px">-12.00 V</div>
<div class="s" style="right:11px;top:182px">-12.00 V</div>
<svg class="a" style="left:374px;top:196px" width="16" height="16" viewBox="0 0 16 16"><rect x="0" y="0.5" width="15" height="2.2" fill="#8c8c8c"/><rect x="0" y="14" width="15" height="2.2" fill="#8c8c8c"/><path d="M7.5 3.5V12.5" stroke="#000" stroke-width="1.4"/><path d="M7.5 3.0L4.7 6.8H10.3Z" fill="#000"/><path d="M7.5 13.0L4.7 9.2H10.3Z" fill="#000"/></svg>
<div class="s" style="left:391px;top:199px">Top - Bottom</div>
<div class="s" style="right:182px;top:199px">24.13 V</div>
<div class="s" style="right:11px;top:199px">24.13 V</div>
<svg class="a" style="left:374px;top:213px" width="16" height="16" viewBox="0 0 16 16"><path d="M0.5 15.5L13 0.5" stroke="#1c1cc8" stroke-width="1.5"/><path d="M12.5 2.5V13.5" stroke="#000" stroke-width="1.4"/><path d="M12.5 2.0L9.7 5.8H15.3Z" fill="#000"/><path d="M3.5 13.5H12.5" stroke="#000" stroke-width="1.3"/><path d="M3.0 13.5L6.8 10.7V16.3Z" fill="#000"/></svg>
<div class="s" style="left:391px;top:216px">Slope</div>
<div class="s" style="right:182px;top:216px">-1.951 V/ms</div>
<div class="s" style="right:11px;top:216px">46.33 V/ms</div>
<svg class="a" style="left:374px;top:230px" width="16" height="16" viewBox="0 0 16 16"><path d="M1.5 9C3 2 5 1 7 5M10.5 11C12 16 14 15 15.5 7" stroke="#9a9ac8" stroke-width="1.7" fill="none"/><rect x="1" y="0" width="14" height="2" fill="#1c1cc8"/><path d="M8.5 3V15.5" stroke="#000" stroke-width="1.4"/><path d="M8.5 2.5L5.5 6.5H11.5Z" fill="#000"/></svg>
<div class="s" style="left:391px;top:233px">Maximum</div>
<div class="s" style="right:182px;top:233px">12.06 V</div>
<div class="s" style="right:11px;top:233px">7.40 V</div>
<svg class="a" style="left:374px;top:247px" width="16" height="16" viewBox="0 0 16 16"><path d="M1.5 9C3 2 5 1 7 5M10.5 11C12 16 14 15 15.5 7" stroke="#9a9ac8" stroke-width="1.7" fill="none"/><path d="M8.5 0.5V12" stroke="#000" stroke-width="1.4"/><path d="M8.5 12.5L5.5 8.5H11.5Z" fill="#000"/><rect x="1" y="13.5" width="14" height="2" fill="#1c1cc8"/></svg>
<div class="s" style="left:391px;top:250px">Minimum</div>
<div class="s" style="right:182px;top:250px">-11.93 V</div>
<div class="s" style="right:11px;top:250px">-7.47 V</div>
<svg class="a" style="left:374px;top:264px" width="16" height="16" viewBox="0 0 16 16"><path d="M1.5 9C3 2 5 1 7 5M10.5 11C12 16 14 15 15.5 7" stroke="#9a9ac8" stroke-width="1.7" fill="none"/><rect x="1" y="0" width="14" height="2" fill="#1c1cc8"/><rect x="1" y="14" width="14" height="2" fill="#1c1cc8"/><path d="M8 3.5V12.5" stroke="#000" stroke-width="1.4"/><path d="M8 3.0L5.2 6.8H10.8Z" fill="#000"/><path d="M8 13.0L5.2 9.2H10.8Z" fill="#000"/></svg>
<div class="s" style="left:391px;top:267px">Maximum - Minimum</div>
<div class="s" style="right:182px;top:267px">23.99 V</div>
<div class="s" style="right:11px;top:267px">14.87 V</div>
<svg class="a" style="left:374px;top:281px" width="16" height="16" viewBox="0 0 16 16"><text x="0.3" y="13.5" font-family="Liberation Sans" font-weight="bold" font-size="14" fill="#1c1cc8" stroke="#1c1cc8" stroke-width="0.5" textLength="15.5" lengthAdjust="spacingAndGlyphs">RMS</text></svg>
<div class="s" style="left:391px;top:284px">RMS</div>
<div class="s" style="right:182px;top:284px">6.70 V</div>
<div class="s" style="right:11px;top:284px">4.32 V</div>
<svg class="a" style="left:374px;top:298px" width="16" height="16" viewBox="0 0 16 16"><rect x="0" y="6.8" width="15.5" height="2" fill="#1c1cc8"/><path d="M7.5 0V5M7.5 10.5V15.5" stroke="#000" stroke-width="1.4"/><path d="M7.5 6.5L4.5 2.5H10.5ZM7.5 9L4.5 13H10.5Z" fill="#000"/></svg>
<div class="s" style="left:391px;top:301px">Mean</div>
<div class="s" style="right:182px;top:301px">0.07 V</div>
<div class="s" style="right:11px;top:301px">-0.14 V</div>
<svg class="a" style="left:374px;top:315px" width="16" height="16" viewBox="0 0 16 16"><ellipse cx="5.6" cy="10.6" rx="4.2" ry="4.0" stroke="#1c1cc8" stroke-width="2.7" fill="none"/><path d="M5 6.4H12.5" stroke="#1c1cc8" stroke-width="2.6"/><text x="12" y="6" font-family="Liberation Sans" font-weight="bold" font-size="7.5" fill="#1c1cc8">2</text></svg>
<div class="s" style="left:391px;top:318px">Variance</div>
<div class="s" style="right:182px;top:318px">44.91 V²</div>
<div class="s" style="right:11px;top:318px">18.62 V²</div>
<svg class="a" style="left:374px;top:332px" width="16" height="16" viewBox="0 0 16 16"><ellipse cx="5.6" cy="9.6" rx="4.2" ry="4.0" stroke="#1c1cc8" stroke-width="2.7" fill="none"/><path d="M5 5.4H12.5" stroke="#1c1cc8" stroke-width="2.6"/></svg>
<div class="s" style="left:391px;top:335px">Standard deviation</div>
<div class="s" style="right:182px;top:335px">6.70 V</div>
<div class="s" style="right:11px;top:335px">4.32 V</div>
<svg class="a" style="left:374px;top:349px" width="16" height="16" viewBox="0 0 16 16"><path d="M0 12.5C2 9 3.5 8.5 6 10.5S9 16 11.5 15.5S14 13.5 15.5 12" stroke="#1c1cc8" stroke-width="1.5" fill="none"/><path d="M11.5 13V5C11.5 2.5 12.5 2 14.5 2.5M9.5 5.5H13.5" stroke="#000" stroke-width="1.7" fill="none"/></svg>
<div class="s" style="left:391px;top:352px">Frequency</div>
<div class="s" style="right:182px;top:352px">- Hz</div>
<div class="s" style="right:11px;top:352px">- Hz</div>
<svg class="a" style="left:374px;top:366px" width="16" height="16" viewBox="0 0 16 16"><path d="M0 12.5C2 9 3.5 8.5 6 10.5S9 16 11.5 15.5S14 13.5 15.5 12" stroke="#1c1cc8" stroke-width="1.5" fill="none"/><path d="M7 1.8H15.5M11.3 1.8V13" stroke="#000" stroke-width="2.2"/></svg>
<div class="s" style="left:391px;top:369px">Period</div>
<div class="s" style="right:182px;top:369px">- s</div>
<div class="s" style="right:11px;top:369px">- s</div>
<svg class="a" style="left:374px;top:383px" width="16" height="16" viewBox="0 0 16 16"><path d="M0.5 13H1.5V8H4V13H10.5V8H13.5V13H15.5" stroke="#1c1cc8" stroke-width="1.7" fill="none"/><rect x="4.3" y="1.5" width="1.6" height="1.6" fill="#000"/><rect x="9.3" y="5" width="1.6" height="1.6" fill="#000"/><path d="M5 6.8L10.5 1.8" stroke="#000" stroke-width="1.2"/></svg>
<div class="s" style="left:391px;top:386px">Duty cycle</div>
<div class="s" style="right:182px;top:386px">- %</div>
<div class="s" style="right:11px;top:386px">- %</div>
<svg class="a" style="left:374px;top:400px" width="16" height="16" viewBox="0 0 16 16"><path d="M0.5 9.5H4V14.5H6.5V9.5H10.5V14.5H13V9.5H15.5" stroke="#1c1cc8" stroke-width="1.7" fill="none"/><rect x="4.3" y="1.5" width="1.6" height="1.6" fill="#000"/><rect x="9.3" y="5" width="1.6" height="1.6" fill="#000"/><path d="M5 6.8L10.5 1.8" stroke="#000" stroke-width="1.2"/></svg>
<div class="s" style="left:391px;top:403px">Duty cycle inverted</div>
<div class="s" style="right:182px;top:403px">- %</div>
<div class="s" style="right:11px;top:403px">- %</div>
<svg class="a" style="left:374px;top:417px" width="16" height="16" viewBox="0 0 16 16"><path d="M0.5 8C2 1 3.5 0.5 5 2.5S9 13 10.5 14S14 12 15.5 6" stroke="#1c1cc8" stroke-width="1.5" fill="none"/></svg>
<div class="s" style="left:391px;top:420px">Crest factor</div>
<div class="s" style="right:182px;top:420px">1.800</div>
<div class="s" style="right:11px;top:420px">1.731</div>
<svg class="a" style="left:374px;top:434px" width="16" height="16" viewBox="0 0 16 16"><path d="M2.5 2.5V11.5C2.5 13 3.5 13.5 4.5 13M1 5.5H4.5" stroke="#000" stroke-width="1.4" fill="none"/><path d="M1 14.5H7.5L9 3.5H15" stroke="#1c1cc8" stroke-width="1.5" fill="none"/><path d="M12.5 4V15" stroke="#000" stroke-width="1.4"/><path d="M12.5 3.5L10.2 6.8H14.8Z" fill="#000"/></svg>
<div class="s" style="left:391px;top:437px">Rise time</div>
<div class="s" style="right:182px;top:437px">7.600 µs</div>
<div class="s" style="right:11px;top:437px">8.080 µs</div>
<svg class="a" style="left:374px;top:451px" width="16" height="16" viewBox="0 0 16 16"><path d="M2.5 2.5V11.5C2.5 13 3.5 13.5 4.5 13M1 5.5H4.5" stroke="#000" stroke-width="1.4" fill="none"/><path d="M1 1.5H7.5L9 13.5H15" stroke="#1c1cc8" stroke-width="1.5" fill="none"/><path d="M12.5 2V13" stroke="#000" stroke-width="1.4"/><path d="M12.5 13.5L10.2 10.2H14.8Z" fill="#000"/></svg>
<div class="s" style="left:391px;top:454px">Fall time</div>
<div class="s" style="right:182px;top:454px">- s</div>
<div class="s" style="right:11px;top:454px">- s</div>
<svg class="a" style="left:374px;top:468px" width="16" height="16" viewBox="0 0 16 16"><path d="M1 3L3.5 8L6 3" stroke="#000" stroke-width="1.5" fill="none"/><path d="M12.5 9V15C12.5 16 13.5 16 14.5 15.5M10.5 11H14.5" stroke="#000" stroke-width="1.4" fill="none"/><path d="M1.5 16.5H7L11 2.5H16" stroke="#1c1cc8" stroke-width="1.6" fill="none"/></svg>
<div class="s" style="left:391px;top:471px">Slew rate</div>
<div class="s" style="right:182px;top:471px">2.526 V/µs</div>
<div class="s" style="right:11px;top:471px">1.473 V/µs</div>
<svg class="a" style="left:374px;top:485px" width="16" height="16" viewBox="0 0 16 16"><path d="M5.5 14V4H9C12.5 4 12.5 9.5 9 9.5H5.5" stroke="#1c1cc8" stroke-width="2.6" fill="none"/></svg>
<div class="s" style="left:391px;top:488px">Power</div>
<div class="s" style="right:182px;top:488px">74.786 mW</div>
<div class="s" style="right:11px;top:488px">31.032 mW</div>
<svg class="a" style="left:374px;top:502px" width="16" height="16" viewBox="0 0 16 16"><path d="M4.18 0.69A7.2 7.2 0 0 0 4.18 12.91M11.82 12.91A7.2 7.2 0 0 0 11.82 0.69M5.35 2.56A5.0 5.0 0 0 0 5.35 11.04M10.65 11.04A5.0 5.0 0 0 0 10.65 2.56M6.52 4.43A2.8 2.8 0 0 0 6.52 9.17M9.48 9.17A2.8 2.8 0 0 0 9.48 4.43" stroke="#1c1cc8" stroke-width="1.35" fill="none"/><path d="M8 7V16.5" stroke="#000" stroke-width="2"/></svg>
<div class="s" style="left:391px;top:505px">dBm</div>
<div class="s" style="right:182px;top:505px">18.738 dBm</div>
<div class="s" style="right:11px;top:505px">14.918 dBm</div>
<svg class="a" style="left:374px;top:519px" width="16" height="16" viewBox="0 0 16 16"><path d="M0.5 0.5V15.5M7.5 0.5V15.5M14.5 0.5V15.5" stroke="#000" stroke-width="1.3"/><path d="M1.2 2.5L5.8 14.2L7.6 2.5L12.6 14.2L14.6 2.5" stroke="#1c1cc8" stroke-width="1.6" fill="none" stroke-linejoin="round"/></svg>
<div class="s" style="left:391px;top:522px">Period count</div>
<div class="s" style="right:182px;top:522px">0</div>
<div class="s" style="right:11px;top:522px">0</div>
<svg class="a" style="left:374px;top:536px" width="16" height="16" viewBox="0 0 16 16"><path d="M0 11.5H1.5V2.5H3.5V11.5H7.5V2.5H9.5V11.5H13.5V2.5H15.5" stroke="#1c1cc8" stroke-width="1.4" fill="none"/><path d="M3.5 0V15M9.5 0V15M15.5 0V15" stroke="#000" stroke-width="1.1"/></svg>
<div class="s" style="left:391px;top:539px">Pulse count</div>
<div class="s" style="right:182px;top:539px">1</div>
<div class="s" style="right:11px;top:539px">0</div>
<svg class="a" style="left:374px;top:553px" width="16" height="16" viewBox="0 0 16 16"><path d="M0 2.5H1.5V11.5H3.5V2.5H7.5V11.5H9.5V2.5H13.5V11.5H15.5" stroke="#1c1cc8" stroke-width="1.4" fill="none"/><path d="M3.5 0V15M9.5 0V15M15.5 0V15" stroke="#000" stroke-width="1.1"/></svg>
<div class="s" style="left:391px;top:556px">Negative pulse count</div>
<div class="s" style="right:182px;top:556px">0</div>
<div class="s" style="right:11px;top:556px">1</div>
<svg class="a" style="left:374px;top:570px" width="16" height="16" viewBox="0 0 16 16"><path d="M7.5 5.5V2.8C7.5 1 10.5 1 10.5 2.8V5.5M7.5 1V5.5" stroke="#000" stroke-width="1.3" fill="none"/><path d="M0 14.5H1.5V7H3.5V14.5H7.5V7H9.5V14.5H13.5V7H15.5" stroke="#909090" stroke-width="1.3" fill="none"/><path d="M0 14.5H1.5V7H3.5M6.5 14.5H7.5V7H9.5M12.5 14.5H13.5V7H15.5" stroke="#10108a" stroke-width="1.4" fill="none"/></svg>
<div class="s" style="left:391px;top:573px">Rising edge count</div>
<div class="s" style="right:182px;top:573px">1</div>
<div class="s" style="right:11px;top:573px">1</div>
<svg class="a" style="left:374px;top:587px" width="16" height="16" viewBox="0 0 16 16"><path d="M7.5 5.5V2.8C7.5 1 10.5 1 10.5 2.8V5.5M7.5 1V5.5" stroke="#000" stroke-width="1.3" fill="none"/><path d="M0 14.5H1.5V7H3.5V14.5H7.5V7H9.5V14.5H13.5V7H15.5" stroke="#909090" stroke-width="1.3" fill="none"/><path d="M2.5 7H3.5V14.5H4.5M8.5 7H9.5V14.5H10.5M14.5 7H15.5V14.5" stroke="#10108a" stroke-width="1.4" fill="none"/></svg>
<div class="s" style="left:391px;top:590px">Falling edge count</div>
<div class="s" style="right:182px;top:590px">1</div>
<div class="s" style="right:11px;top:590px">1</div>
<div class="a" style="left:368px;top:612px;width:519px;height:48px;background:#fff;border:1px solid #828282"></div>
<div class="a" style="left:472px;top:615px;width:1px;height:20px;background:#eaeaf0"></div>
<div class="a" style="left:575px;top:615px;width:1px;height:20px;background:#eaeaf0"></div>
<div class="a" style="left:678px;top:615px;width:1px;height:20px;background:#eaeaf0"></div>
<div class="a" style="left:782px;top:615px;width:1px;height:20px;background:#eaeaf0"></div>
<div class="s" style="left:376px;top:620px">Domain</div>
<div class="s" style="left:376px;top:641px">Time</div>
<div class="s" style="left:479px;top:620px">Left</div>
<div class="s" style="left:479px;top:641px">10.47 µs</div>
<div class="s" style="left:582px;top:620px">Right</div>
<div class="s" style="left:582px;top:641px">30.50 µs</div>
<div class="s" style="left:685px;top:620px">Difference</div>
<div class="s" style="left:685px;top:641px">20.03 µs</div>
<div class="s" style="left:788px;top:620px">1/Difference</div>
<div class="s" style="left:788px;top:641px">49.93 kHz</div>
</body></html>
